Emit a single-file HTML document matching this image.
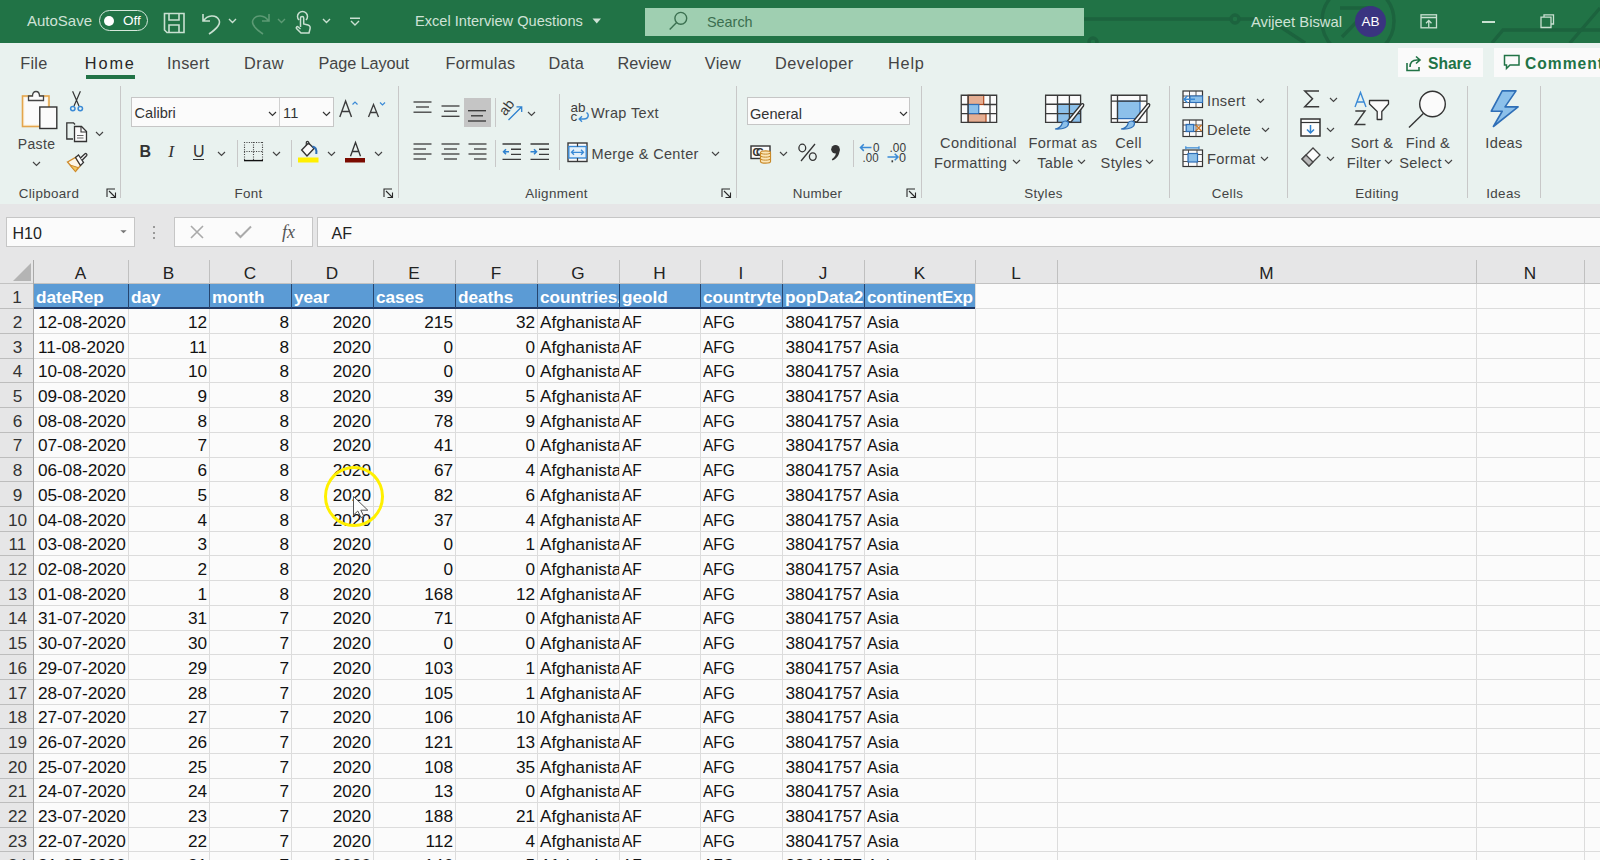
<!DOCTYPE html>
<html><head><meta charset="utf-8"><style>
html,body{margin:0;padding:0}
body{width:1600px;height:860px;overflow:hidden;position:relative;background:#fbfbfb;font-family:"Liberation Sans",sans-serif}
.r{position:absolute;box-sizing:border-box}
svg.r{box-sizing:content-box;overflow:visible}
.t{position:absolute;white-space:nowrap;line-height:1}
</style></head><body>
<div class="r" style="left:0.00px;top:0.00px;width:1600.00px;height:43.00px;background:#217346;"></div>
<svg class="r" style="left:1080px;top:0px" width="520" height="43" viewBox="0 0 520 43" fill="none">
<g stroke="#1c633e" stroke-width="3.4" fill="none">
<path d="M0 19 H151 M159 19 H175"/>
<circle cx="155" cy="19" r="4"/>
<path d="M190 20 L225 43"/>
<circle cx="278" cy="21" r="36"/>
<path d="M260 8 H290 L262 37"/>
<path d="M412 43 L423 30 H520"/>
<path d="M490 43 L520 8"/>
<circle cx="13" cy="42" r="4"/>
</g></svg>
<div class="t" style="left:27.00px;top:13px;font-size:15.00px;color:#cfe2d6;font-weight:normal;">AutoSave</div>
<div class="r" style="left:99px;top:10px;width:49px;height:21px;border:1.8px solid #d6e8dc;border-radius:11px"></div>
<div class="r" style="left:104px;top:15.5px;width:10px;height:10px;border-radius:50%;background:#fff"></div>
<div class="t" style="left:123.00px;top:14px;font-size:13.50px;color:#fff;font-weight:normal;">Off</div>
<svg class="r" style="left:163px;top:12px" width="23" height="22" viewBox="0 0 23 22" fill="none"><path d="M1.5 1.5 H21 V20.5 H4 L1.5 18 Z M6 1.5 V8 H16 V1.5 M6 20.5 V13 H16 V20.5" stroke="#c9e0d1" stroke-width="1.6"/></svg>
<svg class="r" style="left:200px;top:11px" width="24" height="24" viewBox="0 0 24 24" fill="none"><path d="M3 3 V10 H10 M3.5 10 C 7 4, 16 3, 19 9 C 21 13, 18 17, 9 23" stroke="#c9e0d1" stroke-width="1.6"/></svg>
<svg class="r" style="left:228px;top:18px" width="9" height="6" viewBox="0 0 9 6" fill="none"><path d="M1 1 L4.5 4.5 L8 1" stroke="#c9e0d1" stroke-width="1.4"/></svg>
<svg class="r" style="left:249px;top:11px" width="24" height="24" viewBox="0 0 24 24" fill="none"><path d="M20 3 V10 H13 M19.5 10 C 16 4, 7 3, 4 9 C 2 13, 5 17, 14 23" stroke="#5c9a74" stroke-width="1.6"/></svg>
<svg class="r" style="left:277px;top:18px" width="9" height="6" viewBox="0 0 9 6" fill="none"><path d="M1 1 L4.5 4.5 L8 1" stroke="#5c9a74" stroke-width="1.4"/></svg>
<svg class="r" style="left:293px;top:12px" width="19" height="22" viewBox="0 0 19 22" fill="none"><path d="M6 8 A5 5 0 1 1 13 8 M7.5 15 V6 A1.6 1.6 0 0 1 10.7 6 V12 L15 13 C17 13.5 17.5 15 17 17 L16 21 H8 L3.5 16.5 C2.8 15.5 4 14 5.2 15 L7.5 17" stroke="#c9e0d1" stroke-width="1.5"/></svg>
<svg class="r" style="left:322px;top:18px" width="9" height="6" viewBox="0 0 9 6" fill="none"><path d="M1 1 L4.5 4.5 L8 1" stroke="#c9e0d1" stroke-width="1.4"/></svg>
<svg class="r" style="left:349px;top:17px" width="12" height="10" viewBox="0 0 12 10" fill="none"><path d="M1 1.2 H11 M2 4 L6 8 L10 4" stroke="#c9e0d1" stroke-width="1.4"/></svg>
<div class="t" style="left:415.00px;top:14px;font-size:14.60px;color:#cfe2d6;font-weight:normal;">Excel Interview Questions</div>
<svg class="r" style="left:592px;top:18px" width="10" height="6" viewBox="0 0 10 6" fill="none"><path d="M0.5 0.5 H9 L4.75 5.5 Z" fill="#cfe2d6"/></svg>
<div class="r" style="left:645.00px;top:7.50px;width:439.00px;height:28.00px;background:#9fcfb1;"></div>
<svg class="r" style="left:667px;top:10px" width="24" height="24" viewBox="0 0 24 24" fill="none"><circle cx="13.8" cy="8.3" r="5.9" stroke="#3b7050" stroke-width="1.4"/><path d="M9.6 12.5 L2.7 19.6" stroke="#3b7050" stroke-width="1.4"/></svg>
<div class="t" style="left:707.00px;top:15px;font-size:14.40px;color:#3b6e4f;font-weight:normal;">Search</div>
<div class="t" style="left:1251.00px;top:15px;font-size:14.80px;color:#cfe2d6;font-weight:normal;">Avijeet Biswal</div>
<div class="r" style="left:1355px;top:6px;width:31px;height:31px;border-radius:50%;background:#3a3480"></div>
<div class="t" style="left:1370.50px;top:15px;font-size:13.50px;color:#fff;font-weight:normal;transform:translateX(-50%);">AB</div>
<svg class="r" style="left:1419px;top:13px" width="20" height="16" viewBox="0 0 20 16" fill="none"><rect x="2" y="1.8" width="15.5" height="13" stroke="#c9e0d1" stroke-width="1.3"/><path d="M2 4.5 H17.5 M9.75 14.5 V7.5 M7 10.2 L9.75 7.5 L12.5 10.2" stroke="#c9e0d1" stroke-width="1.3"/></svg>
<div class="r" style="left:1482.00px;top:21.00px;width:13.00px;height:1.50px;background:#c9e0d1;"></div>
<svg class="r" style="left:1539px;top:13px" width="17" height="16" viewBox="0 0 17 16" fill="none"><path d="M5 4.2 V1.8 H14.5 V11 H12 M2 4.2 H12 V14.5 H2 Z" stroke="#c9e0d1" stroke-width="1.3"/></svg>
<div class="r" style="left:0.00px;top:43.00px;width:1600.00px;height:161.00px;background:#e9f2ef;"></div>
<div class="t" style="left:20.20px;top:55px;font-size:16.30px;color:#444;font-weight:normal;letter-spacing:0.3px;">File</div>
<div class="t" style="left:84.80px;top:55px;font-size:16.30px;color:#262626;font-weight:normal;letter-spacing:1.9px;">Home</div>
<div class="t" style="left:167.00px;top:55px;font-size:16.30px;color:#444;font-weight:normal;letter-spacing:0.3px;">Insert</div>
<div class="t" style="left:244.00px;top:55px;font-size:16.30px;color:#444;font-weight:normal;letter-spacing:0.5px;">Draw</div>
<div class="t" style="left:318.50px;top:55px;font-size:16.30px;color:#444;font-weight:normal;letter-spacing:-0.1px;">Page Layout</div>
<div class="t" style="left:445.50px;top:55px;font-size:16.30px;color:#444;font-weight:normal;letter-spacing:0.25px;">Formulas</div>
<div class="t" style="left:548.50px;top:55px;font-size:16.30px;color:#444;font-weight:normal;letter-spacing:0.3px;">Data</div>
<div class="t" style="left:617.50px;top:55px;font-size:16.30px;color:#444;font-weight:normal;letter-spacing:0px;">Review</div>
<div class="t" style="left:704.80px;top:55px;font-size:16.30px;color:#444;font-weight:normal;letter-spacing:0.3px;">View</div>
<div class="t" style="left:775.00px;top:55px;font-size:16.30px;color:#444;font-weight:normal;letter-spacing:0.5px;">Developer</div>
<div class="t" style="left:888.00px;top:55px;font-size:16.30px;color:#444;font-weight:normal;letter-spacing:0.8px;">Help</div>
<div class="r" style="left:86.00px;top:75.00px;width:48.50px;height:3.70px;background:#217346;"></div>
<div class="r" style="left:1398.00px;top:48.00px;width:85.00px;height:28.50px;background:#fafafa;"></div>
<svg class="r" style="left:1405px;top:55px" width="18" height="17" viewBox="0 0 18 17" fill="none"><path d="M2 8 V15.5 H14 V12 M5 12 C5 7 8 5 12 5 H14 M11 1.5 L15 5 L11 8.5" stroke="#217346" stroke-width="1.6"/></svg>
<div class="t" style="left:1428.00px;top:56px;font-size:15.60px;color:#217346;font-weight:bold;">Share</div>
<div class="r" style="left:1494.00px;top:48.00px;width:106.00px;height:28.50px;background:#fafafa;"></div>
<svg class="r" style="left:1503px;top:54px" width="18" height="17" viewBox="0 0 18 17" fill="none"><path d="M1.5 1.5 H16 V11 H7 L3.5 14.5 V11 H1.5 Z" stroke="#217346" stroke-width="1.5"/></svg>
<div class="t" style="left:1525.00px;top:56px;font-size:15.60px;color:#217346;font-weight:bold;letter-spacing:1px;">Comments</div>
<div class="r" style="left:120.30px;top:86.00px;width:1.00px;height:112.00px;background:#c8c8c8;"></div>
<div class="r" style="left:398.00px;top:86.00px;width:1.00px;height:112.00px;background:#c8c8c8;"></div>
<div class="r" style="left:736.30px;top:86.00px;width:1.00px;height:112.00px;background:#c8c8c8;"></div>
<div class="r" style="left:920.50px;top:86.00px;width:1.00px;height:112.00px;background:#c8c8c8;"></div>
<div class="r" style="left:1168.70px;top:86.00px;width:1.00px;height:112.00px;background:#c8c8c8;"></div>
<div class="r" style="left:1286.70px;top:86.00px;width:1.00px;height:112.00px;background:#c8c8c8;"></div>
<div class="r" style="left:1467.00px;top:86.00px;width:1.00px;height:112.00px;background:#c8c8c8;"></div>
<div class="r" style="left:1540.00px;top:86.00px;width:1.00px;height:112.00px;background:#c8c8c8;"></div>
<svg class="r" style="left:21px;top:90px" width="38" height="41" viewBox="0 0 38 41" fill="none">
<rect x="1.5" y="6" width="26.5" height="30.5" fill="#fdf3e0" stroke="#e4a54c" stroke-width="1.6"/>
<rect x="3.5" y="8" width="22.5" height="26.5" fill="#fbfbfb"/>
<path d="M7.5 10.5 V6 H11.5 C11.5 2.5 13 1.5 15 1.5 C17 1.5 18.5 2.5 18.5 6 H22.5 V10.5 Z" fill="#fbfbfb" stroke="#444" stroke-width="1.3"/>
<rect x="18.8" y="17" width="17" height="21.5" fill="#fbfbfb" stroke="#333" stroke-width="1.4"/></svg>
<div class="t" style="left:36.50px;top:137px;font-size:14.00px;color:#444;font-weight:normal;transform:translateX(-50%);letter-spacing:0.35px;">Paste</div>
<svg class="r" style="left:31.5px;top:160.5px" width="9" height="6" viewBox="0 0 9 6" fill="none"><path d="M1 1 L4.5 4.5 L8 1" stroke="#444" stroke-width="1.15"/></svg>
<svg class="r" style="left:68px;top:91px" width="18" height="22" viewBox="0 0 18 22" fill="none"><path d="M4.6 0.3 L11 15 M12.4 0.3 L6 15" stroke="#333" stroke-width="1.2"/><circle cx="4.8" cy="17.6" r="2.2" stroke="#3a8ad6" stroke-width="1.5"/><circle cx="12.3" cy="17.6" r="2.2" stroke="#3a8ad6" stroke-width="1.5"/></svg>
<svg class="r" style="left:65px;top:121px" width="24" height="23" viewBox="0 0 24 23" fill="none"><path d="M8 18 H1.8 V1.8 H8.5 L10 3.5" stroke="#333" stroke-width="1.3"/><path d="M9.5 5.5 H16.5 L21.5 10.5 V20.5 H9.5 Z" fill="#fbfbfb" stroke="#333" stroke-width="1.3"/><path d="M16 5.5 V11 H21.5" stroke="#333" stroke-width="1.1"/><path d="M12 14.5 H18.5 M12 17 H18.5" stroke="#666" stroke-width="1"/></svg>
<svg class="r" style="left:94.5px;top:130.5px" width="9" height="6" viewBox="0 0 9 6" fill="none"><path d="M1 1 L4.5 4.5 L8 1" stroke="#444" stroke-width="1.15"/></svg>
<svg class="r" style="left:66px;top:152px" width="22" height="21" viewBox="0 0 22 21" fill="none"><path d="M1.5 10 L9.5 5.5 L14.5 13.5 L9.5 19.5 Z" fill="#fdf6e6" stroke="#cf8a2a" stroke-width="1.4"/><path d="M4 13 L12 15.5 L9.5 19.5 Z" fill="#f0c860" stroke="#cf8a2a" stroke-width="1"/><path d="M9.5 5.5 L12.5 3 L17.5 10.5 L14.5 13.5 Z" fill="#fbfbfb" stroke="#333" stroke-width="1.3"/><path d="M14.5 6 L19 1.8 C20 1 21.5 2.5 20.7 3.5 L16.3 8" fill="#fbfbfb" stroke="#333" stroke-width="1.3"/></svg>
<div class="t" style="left:49.00px;top:187px;font-size:13.40px;color:#444;font-weight:normal;transform:translateX(-50%);letter-spacing:0.35px;">Clipboard</div>
<svg class="r" style="left:105.5px;top:188px" width="11" height="11" viewBox="0 0 11 11" fill="none"><path d="M1 9 V1 H9 M3 3 L9.5 9.5 M9.5 4.5 V9.5 H4.5" stroke="#2a2a2a" stroke-width="1.1"/></svg>
<div class="r" style="left:131px;top:97px;width:203px;height:30px;border:1px solid #c6c6c6;background:#fbfbfb"></div>
<div class="r" style="left:279.00px;top:98.00px;width:1.00px;height:28.00px;background:#d0d0d0;"></div>
<div class="t" style="left:134.50px;top:106px;font-size:14.60px;color:#333;font-weight:normal;letter-spacing:0px;">Calibri</div>
<svg class="r" style="left:267.5px;top:110.5px" width="9" height="6" viewBox="0 0 9 6" fill="none"><path d="M1 1 L4.5 4.5 L8 1" stroke="#333" stroke-width="1.15"/></svg>
<div class="t" style="left:283.00px;top:106px;font-size:14.60px;color:#333;font-weight:normal;letter-spacing:0.3px;">11</div>
<svg class="r" style="left:321.5px;top:110.5px" width="9" height="6" viewBox="0 0 9 6" fill="none"><path d="M1 1 L4.5 4.5 L8 1" stroke="#333" stroke-width="1.15"/></svg>
<svg class="r" style="left:330px;top:95px" width="60" height="25" viewBox="0 0 60 25" fill="none"><path d="M9.8 22 L15.6 6 L21.5 22 M11.9 16.5 H19.4" stroke="#3c3c3c" stroke-width="1.4"/><path d="M22.5 9.5 L25 7 L27.5 9.5" stroke="#3a8ad6" stroke-width="1.2"/><path d="M38.5 22 L43.5 9.5 L48.5 22 M40.3 17.5 H46.7" stroke="#3c3c3c" stroke-width="1.3"/><path d="M50 7.5 L52.5 10 L55 7.5" stroke="#3a8ad6" stroke-width="1.2"/></svg>
<div class="t" style="left:139.50px;top:144px;font-size:16.00px;color:#333;font-weight:bold;">B</div>
<div class="t" style="left:168.20px;top:143px;font-size:17.50px;color:#333;font-weight:normal;font-family:'Liberation Serif',serif;"><i>I</i></div>
<div class="t" style="left:193.00px;top:144px;font-size:16.00px;color:#333;font-weight:normal;">U</div>
<div class="r" style="left:193.00px;top:159.00px;width:11.00px;height:1.30px;background:#333;"></div>
<svg class="r" style="left:216.5px;top:150.5px" width="9" height="6" viewBox="0 0 9 6" fill="none"><path d="M1 1 L4.5 4.5 L8 1" stroke="#444" stroke-width="1.15"/></svg>
<div class="r" style="left:236.50px;top:140.00px;width:1.00px;height:27.00px;background:#c8c8c8;"></div>
<svg class="r" style="left:243px;top:141px" width="22" height="22" viewBox="0 0 22 22" fill="none"><path d="M1 1.5 H20 M1 10.5 H20 M1.5 1 V19 M19.5 1 V19 M10.5 1 V19" stroke="#444" stroke-width="1.1" stroke-dasharray="1.1 1.3"/><path d="M1 19.6 H20" stroke="#111" stroke-width="1.4"/></svg>
<svg class="r" style="left:271.5px;top:150.5px" width="9" height="6" viewBox="0 0 9 6" fill="none"><path d="M1 1 L4.5 4.5 L8 1" stroke="#444" stroke-width="1.15"/></svg>
<div class="r" style="left:290.50px;top:140.00px;width:1.00px;height:27.00px;background:#c8c8c8;"></div>
<svg class="r" style="left:297px;top:140px" width="24" height="25" viewBox="0 0 24 25" fill="none"><path d="M4.7 10 L11.5 3 L17 8.5 L10 16 Z" fill="#fbfbfb" stroke="#333" stroke-width="1.4"/><path d="M9.3 5.3 V2.5 C9.3 1 11.5 1 11.8 2.5 L12.3 5" stroke="#333" stroke-width="1.2"/><path d="M15.5 6.5 C18.5 7 19.8 10 19.3 14" stroke="#2f6fb7" stroke-width="2"/><rect x="1" y="17.5" width="20.5" height="5" fill="#ffef00"/></svg>
<svg class="r" style="left:326.5px;top:150.5px" width="9" height="6" viewBox="0 0 9 6" fill="none"><path d="M1 1 L4.5 4.5 L8 1" stroke="#444" stroke-width="1.15"/></svg>
<svg class="r" style="left:344px;top:141px" width="22" height="22" viewBox="0 0 22 22" fill="none"><path d="M6.5 15.2 L11.5 1.5 L16.5 15.2 M8.2 10.5 H14.8" stroke="#333" stroke-width="1.3"/><rect x="1" y="17" width="20" height="4.5" fill="#7b0b00"/></svg>
<svg class="r" style="left:373.5px;top:150.5px" width="9" height="6" viewBox="0 0 9 6" fill="none"><path d="M1 1 L4.5 4.5 L8 1" stroke="#444" stroke-width="1.15"/></svg>
<div class="t" style="left:248.50px;top:187px;font-size:13.40px;color:#444;font-weight:normal;transform:translateX(-50%);letter-spacing:0.35px;">Font</div>
<svg class="r" style="left:383px;top:188px" width="11" height="11" viewBox="0 0 11 11" fill="none"><path d="M1 9 V1 H9 M3 3 L9.5 9.5 M9.5 4.5 V9.5 H4.5" stroke="#2a2a2a" stroke-width="1.1"/></svg>
<svg class="r" style="left:412px;top:100px" width="22" height="22" viewBox="0 0 22 22" fill="none"><path d="M1.5 2 H19.5" stroke="#444" stroke-width="1.35"/><path d="M4 7 H17" stroke="#444" stroke-width="1.35"/><path d="M1.5 12.2 H19.5" stroke="#444" stroke-width="1.35"/></svg>
<svg class="r" style="left:439.5px;top:102.5px" width="22" height="22" viewBox="0 0 22 22" fill="none"><path d="M1.5 3 H19.5" stroke="#444" stroke-width="1.35"/><path d="M4 8.2 H17" stroke="#444" stroke-width="1.35"/><path d="M1.5 13.3 H19.5" stroke="#444" stroke-width="1.35"/></svg>
<div class="r" style="left:463.50px;top:98.00px;width:27.00px;height:28.50px;background:#c5c5c5;"></div>
<svg class="r" style="left:466px;top:108px" width="22" height="22" viewBox="0 0 22 22" fill="none"><path d="M2 2.7 H20" stroke="#3a3a3a" stroke-width="1.35"/><path d="M5 7.8 H17" stroke="#3a3a3a" stroke-width="1.35"/><path d="M2 13 H20" stroke="#3a3a3a" stroke-width="1.35"/></svg>
<div class="r" style="left:494.50px;top:98.00px;width:1.00px;height:29.00px;background:#c8c8c8;"></div>
<svg class="r" style="left:500px;top:98px" width="25" height="25" viewBox="0 0 25 25" fill="none"><text x="0" y="0" font-family="Liberation Sans" font-size="14" fill="#3a3a3a" transform="translate(5.5,18.5) rotate(-52)">ab</text><path d="M8.5 22 L21.5 9 M16.5 8.8 H21.7 V14" stroke="#2f82d0" stroke-width="1.3"/></svg>
<svg class="r" style="left:526.5px;top:110.5px" width="9" height="6" viewBox="0 0 9 6" fill="none"><path d="M1 1 L4.5 4.5 L8 1" stroke="#444" stroke-width="1.15"/></svg>
<div class="r" style="left:558.60px;top:94.00px;width:1.00px;height:76.00px;background:#c8c8c8;"></div>
<svg class="r" style="left:570px;top:100px" width="22" height="24" viewBox="0 0 22 24" fill="none"><text x="0.5" y="11.5" font-family="Liberation Sans" font-size="13.5" fill="#3c3c3c" textLength="15" lengthAdjust="spacingAndGlyphs">ab</text><text x="0.5" y="20.5" font-family="Liberation Sans" font-size="13.5" fill="#3c3c3c">c</text><path d="M16.5 12.5 C19.5 14.5 18.5 19 14 19 H9.5 M12 16.2 L9.2 19 L12 21.8" stroke="#3a8ad6" stroke-width="1.4"/></svg>
<div class="t" style="left:591.00px;top:106px;font-size:14.50px;color:#444;font-weight:normal;letter-spacing:0.35px;">Wrap Text</div>
<svg class="r" style="left:412px;top:141px" width="22" height="22" viewBox="0 0 22 22" fill="none"><path d="M1.5 3 H19.5" stroke="#444" stroke-width="1.35"/><path d="M1.5 8 H14" stroke="#444" stroke-width="1.35"/><path d="M1.5 13 H19.5" stroke="#444" stroke-width="1.35"/><path d="M1.5 18 H14" stroke="#444" stroke-width="1.35"/></svg>
<svg class="r" style="left:439.5px;top:141px" width="22" height="22" viewBox="0 0 22 22" fill="none"><path d="M1.5 3 H19.5" stroke="#444" stroke-width="1.35"/><path d="M4 8 H17" stroke="#444" stroke-width="1.35"/><path d="M1.5 13 H19.5" stroke="#444" stroke-width="1.35"/><path d="M4 18 H17" stroke="#444" stroke-width="1.35"/></svg>
<svg class="r" style="left:467px;top:141px" width="22" height="22" viewBox="0 0 22 22" fill="none"><path d="M1.5 3 H19.5" stroke="#444" stroke-width="1.35"/><path d="M7 8 H19.5" stroke="#444" stroke-width="1.35"/><path d="M1.5 13 H19.5" stroke="#444" stroke-width="1.35"/><path d="M7 18 H19.5" stroke="#444" stroke-width="1.35"/></svg>
<div class="r" style="left:494.50px;top:140.00px;width:1.00px;height:27.00px;background:#c8c8c8;"></div>
<svg class="r" style="left:501px;top:141px" width="22" height="22" viewBox="0 0 22 22" fill="none"><path d="M1.5 3 H20 M10 8.2 H20 M10 13.3 H20 M1.5 18.4 H20" stroke="#3c3c3c" stroke-width="1.35"/><path d="M8 10.7 H2.5 M5 8.2 L2.5 10.7 L5 13.2" stroke="#2f82d0" stroke-width="1.5"/></svg>
<svg class="r" style="left:528.5px;top:141px" width="22" height="22" viewBox="0 0 22 22" fill="none"><path d="M1.5 3 H20 M10 8.2 H20 M10 13.3 H20 M1.5 18.4 H20" stroke="#3c3c3c" stroke-width="1.35"/><path d="M1.5 10.7 H7.5 M5 8.2 L7.5 10.7 L5 13.2" stroke="#2f82d0" stroke-width="1.5"/></svg>
<svg class="r" style="left:567px;top:141.5px" width="22" height="21" viewBox="0 0 22 21" fill="none"><rect x="1" y="1" width="19" height="18.5" fill="#fbfbfb" stroke="#3a3a3a" stroke-width="1.4"/><rect x="1.8" y="4.5" width="17.4" height="11.5" fill="#e3f0fa" stroke="#3a8ad6" stroke-width="1.4"/><path d="M10.5 1 V4.5 M10.5 16 V19.5" stroke="#3a3a3a" stroke-width="1.2"/><path d="M4.5 10.3 H16.5 M7 7.8 L4.5 10.3 L7 12.8 M14 7.8 L16.5 10.3 L14 12.8" stroke="#3a8ad6" stroke-width="1.3"/></svg>
<div class="t" style="left:591.50px;top:147px;font-size:14.50px;color:#444;font-weight:normal;letter-spacing:0.35px;">Merge &amp; Center</div>
<svg class="r" style="left:710.5px;top:150.5px" width="9" height="6" viewBox="0 0 9 6" fill="none"><path d="M1 1 L4.5 4.5 L8 1" stroke="#444" stroke-width="1.15"/></svg>
<div class="t" style="left:556.50px;top:187px;font-size:13.40px;color:#444;font-weight:normal;transform:translateX(-50%);letter-spacing:0.35px;">Alignment</div>
<svg class="r" style="left:720.5px;top:188px" width="11" height="11" viewBox="0 0 11 11" fill="none"><path d="M1 9 V1 H9 M3 3 L9.5 9.5 M9.5 4.5 V9.5 H4.5" stroke="#2a2a2a" stroke-width="1.1"/></svg>
<div class="r" style="left:747px;top:97px;width:163px;height:28px;border:1px solid #c6c6c6;background:#fbfbfb"></div>
<div class="t" style="left:750.00px;top:107px;font-size:14.60px;color:#333;font-weight:normal;letter-spacing:0px;">General</div>
<svg class="r" style="left:898.5px;top:110.5px" width="9" height="6" viewBox="0 0 9 6" fill="none"><path d="M1 1 L4.5 4.5 L8 1" stroke="#333" stroke-width="1.15"/></svg>
<svg class="r" style="left:749px;top:144px" width="24" height="22" viewBox="0 0 24 22" fill="none"><rect x="2" y="2" width="19" height="12.5" stroke="#333" stroke-width="1.4" fill="#fbfbfb"/><text x="3.6" y="12.3" font-family="Liberation Sans" font-size="10.5" font-weight="bold" fill="#333" textLength="11">CC</text><path d="M11.5 8.5 C11.5 6.3 21.5 6.3 21.5 8.5 V17.5 C21.5 19.7 11.5 19.7 11.5 17.5 Z" fill="#fbe6b8" stroke="#c98a2a" stroke-width="1.2"/><path d="M11.5 8.5 C11.5 10.7 21.5 10.7 21.5 8.5 M11.5 11.5 C11.5 13.7 21.5 13.7 21.5 11.5 M11.5 14.5 C11.5 16.7 21.5 16.7 21.5 14.5" stroke="#c98a2a" stroke-width="1"/></svg>
<svg class="r" style="left:778.5px;top:150.5px" width="9" height="6" viewBox="0 0 9 6" fill="none"><path d="M1 1 L4.5 4.5 L8 1" stroke="#444" stroke-width="1.15"/></svg>
<svg class="r" style="left:797px;top:143px" width="22" height="19" viewBox="0 0 22 19" fill="none"><ellipse cx="5.3" cy="5" rx="3.4" ry="3.8" stroke="#333" stroke-width="1.3"/><ellipse cx="15.8" cy="13.6" rx="3.4" ry="3.8" stroke="#333" stroke-width="1.3"/><path d="M18 1 L4 18" stroke="#333" stroke-width="1.3"/></svg>
<svg class="r" style="left:829px;top:144px" width="13" height="18" viewBox="0 0 13 18" fill="none"><circle cx="6.5" cy="5.3" r="4.3" fill="#333"/><path d="M10.6 5.5 C 10.8 10.5 8 14.5 3.5 16.5 L2.8 15.3 C 6 13 7.2 10.5 7 7.5 Z" fill="#333"/></svg>
<div class="r" style="left:852.70px;top:140.00px;width:1.00px;height:27.00px;background:#c8c8c8;"></div>
<svg class="r" style="left:859px;top:141px" width="22" height="23" viewBox="0 0 22 23" fill="none"><text x="14" y="11.3" font-family="Liberation Sans" font-size="13" fill="#3a3a3a" textLength="6.5" lengthAdjust="spacingAndGlyphs">0</text><text x="3.6" y="21.4" font-family="Liberation Sans" font-size="13" fill="#3a3a3a" textLength="16" lengthAdjust="spacingAndGlyphs">.00</text><path d="M12.5 6.6 H1.5 M4.8 3.3 L1.5 6.6 L4.8 9.9" stroke="#3a8ad6" stroke-width="1.5"/></svg>
<svg class="r" style="left:886px;top:141px" width="22" height="23" viewBox="0 0 22 23" fill="none"><text x="3.5" y="11.3" font-family="Liberation Sans" font-size="13" fill="#3a3a3a" textLength="16.5" lengthAdjust="spacingAndGlyphs">.00</text><text x="13" y="21.4" font-family="Liberation Sans" font-size="13" fill="#3a3a3a" textLength="7" lengthAdjust="spacingAndGlyphs">0</text><rect x="5.5" y="19.3" width="1.6" height="2" fill="#3a3a3a"/><path d="M1.5 16 H12 M8.7 12.7 L12 16 L8.7 19.3" stroke="#3a8ad6" stroke-width="1.5"/></svg>
<div class="t" style="left:817.50px;top:187px;font-size:13.40px;color:#444;font-weight:normal;transform:translateX(-50%);letter-spacing:0.35px;">Number</div>
<svg class="r" style="left:905.5px;top:188px" width="11" height="11" viewBox="0 0 11 11" fill="none"><path d="M1 9 V1 H9 M3 3 L9.5 9.5 M9.5 4.5 V9.5 H4.5" stroke="#2a2a2a" stroke-width="1.1"/></svg>
<svg class="r" style="left:960px;top:94px" width="38" height="30" viewBox="0 0 38 30" fill="none">
<rect x="1.25" y="1.25" width="35.4" height="27.2" fill="#fbfbfb"/>
<rect x="8.1" y="1.25" width="15.6" height="9.25" fill="#e4ae93" stroke="#b0481c" stroke-width="1.2"/>
<rect x="8.1" y="19.6" width="17.9" height="8.85" fill="#e4ae93" stroke="#b0481c" stroke-width="1.2"/>
<rect x="8.1" y="10.5" width="10.65" height="9.1" fill="#8cc0ea" stroke="#2f6fb7" stroke-width="1.2"/>
<path d="M1.25 1.25 H36.65 V28.45 H1.25 Z M8.1 1.25 V28.45 M30 1.25 V28.45 M1.25 10.5 H8.1 M23.7 10.5 H36.65 M1.25 19.6 H8.1 M18.75 19.6 H36.65" stroke="#3a3a3a" stroke-width="1.3"/></svg>
<div class="t" style="left:978.50px;top:136px;font-size:14.60px;color:#444;font-weight:normal;transform:translateX(-50%);letter-spacing:0.35px;">Conditional</div>
<div class="t" style="left:970.50px;top:156px;font-size:14.60px;color:#444;font-weight:normal;transform:translateX(-50%);letter-spacing:0.35px;">Formatting</div>
<svg class="r" style="left:1011.5px;top:158.5px" width="9" height="6" viewBox="0 0 9 6" fill="none"><path d="M1 1 L4.5 4.5 L8 1" stroke="#444" stroke-width="1.15"/></svg>
<svg class="r" style="left:1044px;top:94px" width="42" height="37" viewBox="0 0 42 37" fill="none">
<rect x="1.6" y="1.25" width="35" height="27.2" fill="#fbfbfb"/>
<rect x="13.5" y="10.25" width="23.1" height="18.2" fill="#8cc0ea" stroke="#2f6fb7" stroke-width="1.2"/>
<path d="M1.6 1.25 H36.6 V28.45 H1.6 Z M13.5 1.25 V28.45 M25.4 1.25 V28.45 M1.6 10.25 H36.6 M1.6 19.6 H36.6" stroke="#3a3a3a" stroke-width="1.3"/>
<path d="M37 10.5 C38.5 8.8 40.5 10 39.5 12 L27 28 L23.5 27 Z" fill="#fbfbfb" stroke="#333" stroke-width="1.3" stroke-linejoin="round"/>
<path d="M11 35 C 16 34.5 17.5 32 18.5 28.5 C20 26.3 24.5 26.5 24.5 29.5 C 24.5 33 20 35.5 11 35 Z" fill="#8cc0ea" stroke="#2f6fb7" stroke-width="1.2"/></svg>
<div class="t" style="left:1063.00px;top:136px;font-size:14.60px;color:#444;font-weight:normal;transform:translateX(-50%);letter-spacing:0.35px;">Format as</div>
<div class="t" style="left:1055.50px;top:156px;font-size:14.60px;color:#444;font-weight:normal;transform:translateX(-50%);letter-spacing:0.35px;">Table</div>
<svg class="r" style="left:1076.5px;top:158.5px" width="9" height="6" viewBox="0 0 9 6" fill="none"><path d="M1 1 L4.5 4.5 L8 1" stroke="#444" stroke-width="1.15"/></svg>
<svg class="r" style="left:1110px;top:94px" width="42" height="37" viewBox="0 0 42 37" fill="none">
<rect x="1.25" y="1.25" width="35.65" height="27.2" fill="#fbfbfb"/>
<rect x="7.5" y="7.1" width="22.5" height="17.5" fill="#8cc0ea" stroke="#2f6fb7" stroke-width="1.2"/>
<path d="M1.25 1.25 H36.9 V28.45 H1.25 Z M7.5 1.25 V28.45 M30 1.25 V7.1 M1.25 7.1 H36.9 M1.25 24.6 H7.5" stroke="#3a3a3a" stroke-width="1.3"/>
<path d="M37 10.5 C38.5 8.8 40.5 10 39.5 12 L27 28 L23.5 27 Z" fill="#fbfbfb" stroke="#333" stroke-width="1.3" stroke-linejoin="round"/>
<path d="M11 35 C 16 34.5 17.5 32 18.5 28.5 C20 26.3 24.5 26.5 24.5 29.5 C 24.5 33 20 35.5 11 35 Z" fill="#8cc0ea" stroke="#2f6fb7" stroke-width="1.2"/></svg>
<div class="t" style="left:1128.50px;top:136px;font-size:14.60px;color:#444;font-weight:normal;transform:translateX(-50%);letter-spacing:0.35px;">Cell</div>
<div class="t" style="left:1121.50px;top:156px;font-size:14.60px;color:#444;font-weight:normal;transform:translateX(-50%);letter-spacing:0.35px;">Styles</div>
<svg class="r" style="left:1144.5px;top:158.5px" width="9" height="6" viewBox="0 0 9 6" fill="none"><path d="M1 1 L4.5 4.5 L8 1" stroke="#444" stroke-width="1.15"/></svg>
<div class="t" style="left:1043.50px;top:187px;font-size:13.40px;color:#444;font-weight:normal;transform:translateX(-50%);letter-spacing:0.35px;">Styles</div>
<svg class="r" style="left:1182px;top:89.5px" width="21" height="22" viewBox="0 0 21 22" fill="none"><rect x="1" y="1" width="19.5" height="16.5" fill="#fbfbfb" stroke="#333" stroke-width="1.2"/><path d="M7.5 1 V17.5 M14 1 V17.5 M1 6 H20.5 M1 12.5 H20.5" stroke="#444" stroke-width="0.9"/><rect x="8" y="6" width="12.5" height="6.5" fill="#8cc0ea" stroke="#2f6fb7" stroke-width="1.1"/><path d="M13 9.3 H2 M5.5 5.8 L2 9.3 L5.5 12.8" stroke="#3a8ad6" stroke-width="1.5"/></svg>
<div class="t" style="left:1207.00px;top:94px;font-size:14.60px;color:#444;font-weight:normal;letter-spacing:0.35px;">Insert</div>
<svg class="r" style="left:1255.5px;top:97.5px" width="9" height="6" viewBox="0 0 9 6" fill="none"><path d="M1 1 L4.5 4.5 L8 1" stroke="#444" stroke-width="1.15"/></svg>
<svg class="r" style="left:1182px;top:119px" width="21" height="22" viewBox="0 0 21 22" fill="none"><rect x="1" y="1" width="19.5" height="16.5" fill="#fbfbfb" stroke="#333" stroke-width="1.2"/><path d="M7.5 1 V17.5 M14 1 V17.5 M1 6 H20.5 M1 12.5 H20.5" stroke="#444" stroke-width="0.9"/><rect x="4.2" y="5.5" width="7.5" height="7" fill="#8cc0ea" stroke="#2f6fb7" stroke-width="1.3"/><path d="M13.8 6 L19.5 12 M19.5 6 L13.8 12" stroke="#d07a2a" stroke-width="1.4"/></svg>
<div class="t" style="left:1207.00px;top:123px;font-size:14.60px;color:#444;font-weight:normal;letter-spacing:0.35px;">Delete</div>
<svg class="r" style="left:1260.5px;top:126.5px" width="9" height="6" viewBox="0 0 9 6" fill="none"><path d="M1 1 L4.5 4.5 L8 1" stroke="#444" stroke-width="1.15"/></svg>
<svg class="r" style="left:1182px;top:146px" width="21" height="22" viewBox="0 0 21 22" fill="none"><rect x="1" y="4" width="19.5" height="16.5" fill="#fbfbfb" stroke="#333" stroke-width="1.2"/><path d="M6.5 4 V20.5 M15 4 V20.5 M1 8.5 H20.5 M1 15.5 H20.5" stroke="#444" stroke-width="0.9"/><rect x="6" y="7.5" width="9.5" height="8.5" fill="#8cc0ea" stroke="#2f6fb7" stroke-width="1.2"/><path d="M3.8 1.8 H17 M3.8 0.3 V3.3 M17 0.3 V3.3" stroke="#3a8ad6" stroke-width="1.2"/></svg>
<div class="t" style="left:1207.00px;top:152px;font-size:14.60px;color:#444;font-weight:normal;letter-spacing:0.35px;">Format</div>
<svg class="r" style="left:1259.5px;top:155.5px" width="9" height="6" viewBox="0 0 9 6" fill="none"><path d="M1 1 L4.5 4.5 L8 1" stroke="#444" stroke-width="1.15"/></svg>
<div class="t" style="left:1227.50px;top:187px;font-size:13.40px;color:#444;font-weight:normal;transform:translateX(-50%);letter-spacing:0.35px;">Cells</div>
<svg class="r" style="left:1300px;top:86px" width="24" height="26" viewBox="0 0 24 26" fill="none"><path d="M19 5 H4.8 L12.5 12.8 L4.8 20.7 H19.2" stroke="#3a3a3a" stroke-width="1.5" stroke-linejoin="miter"/></svg>
<svg class="r" style="left:1328.5px;top:96.5px" width="9" height="6" viewBox="0 0 9 6" fill="none"><path d="M1 1 L4.5 4.5 L8 1" stroke="#444" stroke-width="1.15"/></svg>
<svg class="r" style="left:1300px;top:118px" width="22" height="20" viewBox="0 0 22 20" fill="none"><rect x="1" y="1" width="19" height="17" fill="#fdfdfd" stroke="#333" stroke-width="1.5"/><path d="M1 4.5 H20" stroke="#333" stroke-width="1.2"/><path d="M10.5 7 V15 M7 11.5 L10.5 15 L14 11.5" stroke="#2f82d0" stroke-width="1.5"/></svg>
<svg class="r" style="left:1325.5px;top:126.5px" width="9" height="6" viewBox="0 0 9 6" fill="none"><path d="M1 1 L4.5 4.5 L8 1" stroke="#444" stroke-width="1.15"/></svg>
<svg class="r" style="left:1300px;top:146px" width="22" height="22" viewBox="0 0 22 22" fill="none"><path d="M2 13 L13 2 L20 9 L9 20 Z" fill="#fdfdfd" stroke="#444" stroke-width="1.3"/><path d="M2 13 L6 9 L13 16 L9 20 Z" fill="#b9b9b9" stroke="#444" stroke-width="1.3"/></svg>
<svg class="r" style="left:1325.5px;top:155.5px" width="9" height="6" viewBox="0 0 9 6" fill="none"><path d="M1 1 L4.5 4.5 L8 1" stroke="#444" stroke-width="1.15"/></svg>
<svg class="r" style="left:1350px;top:88px" width="44" height="40" viewBox="0 0 44 40" fill="none"><path d="M5 19 L10.5 4.5 L16 19 M7 14 H14" stroke="#3a8ad6" stroke-width="1.4"/><path d="M5.3 23 H15 L5.2 36.5 H15.5" stroke="#3a3a3a" stroke-width="1.4"/><path d="M19.5 12.5 H38.5 V16 L31.8 23.5 V31.5 H27.2 V23.5 L19.5 16 Z" fill="#fbfbfb" stroke="#333" stroke-width="1.3" stroke-linejoin="round"/></svg>
<div class="t" style="left:1372.00px;top:136px;font-size:14.60px;color:#444;font-weight:normal;transform:translateX(-50%);letter-spacing:0.35px;">Sort &amp;</div>
<div class="t" style="left:1364.00px;top:156px;font-size:14.60px;color:#444;font-weight:normal;transform:translateX(-50%);letter-spacing:0.35px;">Filter</div>
<svg class="r" style="left:1383.5px;top:158.5px" width="9" height="6" viewBox="0 0 9 6" fill="none"><path d="M1 1 L4.5 4.5 L8 1" stroke="#444" stroke-width="1.15"/></svg>
<svg class="r" style="left:1406px;top:88px" width="44" height="42" viewBox="0 0 44 42" fill="none"><circle cx="26.5" cy="16" r="12.8" fill="#fbfbfb" stroke="#333" stroke-width="1.4"/><path d="M17.3 25.5 L3 39.5" stroke="#333" stroke-width="1.4"/></svg>
<div class="t" style="left:1428.00px;top:136px;font-size:14.60px;color:#444;font-weight:normal;transform:translateX(-50%);letter-spacing:0.35px;">Find &amp;</div>
<div class="t" style="left:1420.50px;top:156px;font-size:14.60px;color:#444;font-weight:normal;transform:translateX(-50%);letter-spacing:0.35px;">Select</div>
<svg class="r" style="left:1443.5px;top:158.5px" width="9" height="6" viewBox="0 0 9 6" fill="none"><path d="M1 1 L4.5 4.5 L8 1" stroke="#444" stroke-width="1.15"/></svg>
<div class="t" style="left:1377.00px;top:187px;font-size:13.40px;color:#444;font-weight:normal;transform:translateX(-50%);letter-spacing:0.35px;">Editing</div>
<svg class="r" style="left:1488px;top:89px" width="32" height="40" viewBox="0 0 32 40" fill="none"><path d="M14.2 1.9 H28 L17 17.9 H30.1 L5.4 37.5 L14.2 22.25 H3.25 Z" fill="#8cc0ea" stroke="#2f6fb7" stroke-width="1.6" stroke-linejoin="round"/></svg>
<div class="t" style="left:1504.00px;top:136px;font-size:14.60px;color:#444;font-weight:normal;transform:translateX(-50%);letter-spacing:0.35px;">Ideas</div>
<div class="t" style="left:1503.50px;top:187px;font-size:13.40px;color:#444;font-weight:normal;transform:translateX(-50%);letter-spacing:0.35px;">Ideas</div>
<div class="r" style="left:0.00px;top:204.00px;width:1600.00px;height:80.00px;background:#e6e6e7;"></div>
<div class="r" style="left:6px;top:217px;width:129px;height:30px;border:1px solid #c6c6c6;background:#fbfbfb"></div>
<div class="t" style="left:12.50px;top:226px;font-size:16.00px;color:#222;font-weight:normal;">H10</div>
<svg class="r" style="left:119.5px;top:230px" width="8" height="4" viewBox="0 0 8 4" fill="none"><path d="M0.3 0.3 H6.7 L3.5 3.3 Z" fill="#777"/></svg>
<div class="r" style="left:152.50px;top:226.00px;width:2.20px;height:2.40px;background:#999;"></div>
<div class="r" style="left:152.50px;top:231.50px;width:2.20px;height:2.40px;background:#999;"></div>
<div class="r" style="left:152.50px;top:237.00px;width:2.20px;height:2.40px;background:#999;"></div>
<div class="r" style="left:174px;top:217px;width:139px;height:30px;border:1px solid #c6c6c6;background:#fbfbfb"></div>
<svg class="r" style="left:189px;top:224px" width="16" height="16" viewBox="0 0 16 16" fill="none"><path d="M2 2 L14 14 M14 2 L2 14" stroke="#aaa" stroke-width="1.6"/></svg>
<svg class="r" style="left:234px;top:225px" width="19" height="14" viewBox="0 0 19 14" fill="none"><path d="M1.5 7 L6.5 12 L17 1.5" stroke="#aaa" stroke-width="2"/></svg>
<div class="t" style="left:288.50px;top:223px;font-size:18.00px;color:#555;font-weight:normal;transform:translateX(-50%);font-family:'Liberation Serif',serif;"><i>fx</i></div>
<div class="r" style="left:317px;top:217px;width:1290px;height:30px;border:1px solid #c6c6c6;background:#fbfbfb"></div>
<div class="t" style="left:331.50px;top:226px;font-size:16.00px;color:#222;font-weight:normal;">AF</div>
<div class="r" style="left:33.00px;top:284.00px;width:1567.00px;height:576.00px;background:#fbfbfb;"></div>
<div class="r" style="left:0.00px;top:247.00px;width:1600.00px;height:37.00px;background:#e6e6e7;"></div>
<div class="r" style="left:0.00px;top:284.00px;width:33.00px;height:576.00px;background:#e6e6e7;"></div>
<svg class="r" style="left:13px;top:263px" width="19" height="18" viewBox="0 0 19 18" fill="none"><path d="M18 0 V18 H0 Z" fill="#b4b4b4"/></svg>
<div class="t" style="left:80.50px;top:265px;font-size:17.20px;color:#222;font-weight:normal;transform:translateX(-50%);">A</div>
<div class="r" style="left:128.00px;top:260.00px;width:1.00px;height:24.00px;background:#c0c0c0;"></div>
<div class="t" style="left:168.50px;top:265px;font-size:17.20px;color:#222;font-weight:normal;transform:translateX(-50%);">B</div>
<div class="r" style="left:209.00px;top:260.00px;width:1.00px;height:24.00px;background:#c0c0c0;"></div>
<div class="t" style="left:250.00px;top:265px;font-size:17.20px;color:#222;font-weight:normal;transform:translateX(-50%);">C</div>
<div class="r" style="left:291.00px;top:260.00px;width:1.00px;height:24.00px;background:#c0c0c0;"></div>
<div class="t" style="left:332.00px;top:265px;font-size:17.20px;color:#222;font-weight:normal;transform:translateX(-50%);">D</div>
<div class="r" style="left:373.00px;top:260.00px;width:1.00px;height:24.00px;background:#c0c0c0;"></div>
<div class="t" style="left:414.00px;top:265px;font-size:17.20px;color:#222;font-weight:normal;transform:translateX(-50%);">E</div>
<div class="r" style="left:455.00px;top:260.00px;width:1.00px;height:24.00px;background:#c0c0c0;"></div>
<div class="t" style="left:496.00px;top:265px;font-size:17.20px;color:#222;font-weight:normal;transform:translateX(-50%);">F</div>
<div class="r" style="left:537.00px;top:260.00px;width:1.00px;height:24.00px;background:#c0c0c0;"></div>
<div class="t" style="left:578.00px;top:265px;font-size:17.20px;color:#222;font-weight:normal;transform:translateX(-50%);">G</div>
<div class="r" style="left:619.00px;top:260.00px;width:1.00px;height:24.00px;background:#c0c0c0;"></div>
<div class="t" style="left:659.50px;top:265px;font-size:17.20px;color:#222;font-weight:normal;transform:translateX(-50%);">H</div>
<div class="r" style="left:700.00px;top:260.00px;width:1.00px;height:24.00px;background:#c0c0c0;"></div>
<div class="t" style="left:741.00px;top:265px;font-size:17.20px;color:#222;font-weight:normal;transform:translateX(-50%);">I</div>
<div class="r" style="left:782.00px;top:260.00px;width:1.00px;height:24.00px;background:#c0c0c0;"></div>
<div class="t" style="left:823.00px;top:265px;font-size:17.20px;color:#222;font-weight:normal;transform:translateX(-50%);">J</div>
<div class="r" style="left:864.00px;top:260.00px;width:1.00px;height:24.00px;background:#c0c0c0;"></div>
<div class="t" style="left:919.50px;top:265px;font-size:17.20px;color:#222;font-weight:normal;transform:translateX(-50%);">K</div>
<div class="r" style="left:975.00px;top:260.00px;width:1.00px;height:24.00px;background:#c0c0c0;"></div>
<div class="t" style="left:1016.00px;top:265px;font-size:17.20px;color:#222;font-weight:normal;transform:translateX(-50%);">L</div>
<div class="r" style="left:1057.00px;top:260.00px;width:1.00px;height:24.00px;background:#c0c0c0;"></div>
<div class="t" style="left:1266.50px;top:265px;font-size:17.20px;color:#222;font-weight:normal;transform:translateX(-50%);">M</div>
<div class="r" style="left:1476.00px;top:260.00px;width:1.00px;height:24.00px;background:#c0c0c0;"></div>
<div class="t" style="left:1530.00px;top:265px;font-size:17.20px;color:#222;font-weight:normal;transform:translateX(-50%);">N</div>
<div class="r" style="left:1584.00px;top:260.00px;width:1.00px;height:24.00px;background:#c0c0c0;"></div>
<div class="r" style="left:0.00px;top:283.00px;width:1600.00px;height:1.00px;background:#c2c2c2;"></div>
<div class="r" style="left:33.00px;top:260.00px;width:1.00px;height:600.00px;background:#a9a9a9;"></div>
<div class="r" style="left:34.00px;top:308.00px;width:1566.00px;height:1.00px;background:#dcdcdc;"></div>
<div class="r" style="left:0.00px;top:308.00px;width:33.00px;height:1.00px;background:#bdbdbd;"></div>
<div class="r" style="left:34.00px;top:333.00px;width:1566.00px;height:1.00px;background:#dcdcdc;"></div>
<div class="r" style="left:0.00px;top:333.00px;width:33.00px;height:1.00px;background:#bdbdbd;"></div>
<div class="r" style="left:34.00px;top:358.00px;width:1566.00px;height:1.00px;background:#dcdcdc;"></div>
<div class="r" style="left:0.00px;top:358.00px;width:33.00px;height:1.00px;background:#bdbdbd;"></div>
<div class="r" style="left:34.00px;top:382.00px;width:1566.00px;height:1.00px;background:#dcdcdc;"></div>
<div class="r" style="left:0.00px;top:382.00px;width:33.00px;height:1.00px;background:#bdbdbd;"></div>
<div class="r" style="left:34.00px;top:407.00px;width:1566.00px;height:1.00px;background:#dcdcdc;"></div>
<div class="r" style="left:0.00px;top:407.00px;width:33.00px;height:1.00px;background:#bdbdbd;"></div>
<div class="r" style="left:34.00px;top:432.00px;width:1566.00px;height:1.00px;background:#dcdcdc;"></div>
<div class="r" style="left:0.00px;top:432.00px;width:33.00px;height:1.00px;background:#bdbdbd;"></div>
<div class="r" style="left:34.00px;top:457.00px;width:1566.00px;height:1.00px;background:#dcdcdc;"></div>
<div class="r" style="left:0.00px;top:457.00px;width:33.00px;height:1.00px;background:#bdbdbd;"></div>
<div class="r" style="left:34.00px;top:481.00px;width:1566.00px;height:1.00px;background:#dcdcdc;"></div>
<div class="r" style="left:0.00px;top:481.00px;width:33.00px;height:1.00px;background:#bdbdbd;"></div>
<div class="r" style="left:34.00px;top:506.00px;width:1566.00px;height:1.00px;background:#dcdcdc;"></div>
<div class="r" style="left:0.00px;top:506.00px;width:33.00px;height:1.00px;background:#bdbdbd;"></div>
<div class="r" style="left:34.00px;top:531.00px;width:1566.00px;height:1.00px;background:#dcdcdc;"></div>
<div class="r" style="left:0.00px;top:531.00px;width:33.00px;height:1.00px;background:#bdbdbd;"></div>
<div class="r" style="left:34.00px;top:555.00px;width:1566.00px;height:1.00px;background:#dcdcdc;"></div>
<div class="r" style="left:0.00px;top:555.00px;width:33.00px;height:1.00px;background:#bdbdbd;"></div>
<div class="r" style="left:34.00px;top:580.00px;width:1566.00px;height:1.00px;background:#dcdcdc;"></div>
<div class="r" style="left:0.00px;top:580.00px;width:33.00px;height:1.00px;background:#bdbdbd;"></div>
<div class="r" style="left:34.00px;top:605.00px;width:1566.00px;height:1.00px;background:#dcdcdc;"></div>
<div class="r" style="left:0.00px;top:605.00px;width:33.00px;height:1.00px;background:#bdbdbd;"></div>
<div class="r" style="left:34.00px;top:630.00px;width:1566.00px;height:1.00px;background:#dcdcdc;"></div>
<div class="r" style="left:0.00px;top:630.00px;width:33.00px;height:1.00px;background:#bdbdbd;"></div>
<div class="r" style="left:34.00px;top:654.00px;width:1566.00px;height:1.00px;background:#dcdcdc;"></div>
<div class="r" style="left:0.00px;top:654.00px;width:33.00px;height:1.00px;background:#bdbdbd;"></div>
<div class="r" style="left:34.00px;top:679.00px;width:1566.00px;height:1.00px;background:#dcdcdc;"></div>
<div class="r" style="left:0.00px;top:679.00px;width:33.00px;height:1.00px;background:#bdbdbd;"></div>
<div class="r" style="left:34.00px;top:704.00px;width:1566.00px;height:1.00px;background:#dcdcdc;"></div>
<div class="r" style="left:0.00px;top:704.00px;width:33.00px;height:1.00px;background:#bdbdbd;"></div>
<div class="r" style="left:34.00px;top:728.00px;width:1566.00px;height:1.00px;background:#dcdcdc;"></div>
<div class="r" style="left:0.00px;top:728.00px;width:33.00px;height:1.00px;background:#bdbdbd;"></div>
<div class="r" style="left:34.00px;top:753.00px;width:1566.00px;height:1.00px;background:#dcdcdc;"></div>
<div class="r" style="left:0.00px;top:753.00px;width:33.00px;height:1.00px;background:#bdbdbd;"></div>
<div class="r" style="left:34.00px;top:778.00px;width:1566.00px;height:1.00px;background:#dcdcdc;"></div>
<div class="r" style="left:0.00px;top:778.00px;width:33.00px;height:1.00px;background:#bdbdbd;"></div>
<div class="r" style="left:34.00px;top:802.00px;width:1566.00px;height:1.00px;background:#dcdcdc;"></div>
<div class="r" style="left:0.00px;top:802.00px;width:33.00px;height:1.00px;background:#bdbdbd;"></div>
<div class="r" style="left:34.00px;top:827.00px;width:1566.00px;height:1.00px;background:#dcdcdc;"></div>
<div class="r" style="left:0.00px;top:827.00px;width:33.00px;height:1.00px;background:#bdbdbd;"></div>
<div class="r" style="left:34.00px;top:851.00px;width:1566.00px;height:1.00px;background:#dcdcdc;"></div>
<div class="r" style="left:0.00px;top:851.00px;width:33.00px;height:1.00px;background:#bdbdbd;"></div>
<div class="r" style="left:34.00px;top:877.00px;width:1566.00px;height:1.00px;background:#dcdcdc;"></div>
<div class="r" style="left:0.00px;top:877.00px;width:33.00px;height:1.00px;background:#bdbdbd;"></div>
<div class="r" style="left:34.00px;top:901.00px;width:1566.00px;height:1.00px;background:#dcdcdc;"></div>
<div class="r" style="left:0.00px;top:901.00px;width:33.00px;height:1.00px;background:#bdbdbd;"></div>
<div class="r" style="left:128.00px;top:284.00px;width:1.00px;height:576.00px;background:#dcdcdc;"></div>
<div class="r" style="left:209.00px;top:284.00px;width:1.00px;height:576.00px;background:#dcdcdc;"></div>
<div class="r" style="left:291.00px;top:284.00px;width:1.00px;height:576.00px;background:#dcdcdc;"></div>
<div class="r" style="left:373.00px;top:284.00px;width:1.00px;height:576.00px;background:#dcdcdc;"></div>
<div class="r" style="left:455.00px;top:284.00px;width:1.00px;height:576.00px;background:#dcdcdc;"></div>
<div class="r" style="left:537.00px;top:284.00px;width:1.00px;height:576.00px;background:#dcdcdc;"></div>
<div class="r" style="left:619.00px;top:284.00px;width:1.00px;height:576.00px;background:#dcdcdc;"></div>
<div class="r" style="left:700.00px;top:284.00px;width:1.00px;height:576.00px;background:#dcdcdc;"></div>
<div class="r" style="left:782.00px;top:284.00px;width:1.00px;height:576.00px;background:#dcdcdc;"></div>
<div class="r" style="left:864.00px;top:284.00px;width:1.00px;height:576.00px;background:#dcdcdc;"></div>
<div class="r" style="left:975.00px;top:284.00px;width:1.00px;height:576.00px;background:#dcdcdc;"></div>
<div class="r" style="left:1057.00px;top:284.00px;width:1.00px;height:576.00px;background:#dcdcdc;"></div>
<div class="r" style="left:1476.00px;top:284.00px;width:1.00px;height:576.00px;background:#dcdcdc;"></div>
<div class="r" style="left:1584.00px;top:284.00px;width:1.00px;height:576.00px;background:#dcdcdc;"></div>
<div class="r" style="left:34.00px;top:284.00px;width:941.00px;height:24.00px;background:#5b9bd5;"></div>
<div class="r" style="left:34.00px;top:307.00px;width:941.00px;height:2.00px;background:#203864;"></div>
<div class="r" style="left:34px;top:284px;width:94px;height:24px;overflow:hidden">
<div class="t" style="left:2px;top:5px;font-size:17.20px;color:#fff;font-weight:bold;letter-spacing:0px">dateRep</div></div>
<div class="r" style="left:128.00px;top:284.00px;width:1.00px;height:24.00px;background:#26456e;"></div>
<div class="r" style="left:129px;top:284px;width:80px;height:24px;overflow:hidden">
<div class="t" style="left:2px;top:5px;font-size:17.20px;color:#fff;font-weight:bold;letter-spacing:0px">day</div></div>
<div class="r" style="left:209.00px;top:284.00px;width:1.00px;height:24.00px;background:#26456e;"></div>
<div class="r" style="left:210px;top:284px;width:81px;height:24px;overflow:hidden">
<div class="t" style="left:2px;top:5px;font-size:17.20px;color:#fff;font-weight:bold;letter-spacing:0px">month</div></div>
<div class="r" style="left:291.00px;top:284.00px;width:1.00px;height:24.00px;background:#26456e;"></div>
<div class="r" style="left:292px;top:284px;width:81px;height:24px;overflow:hidden">
<div class="t" style="left:2px;top:5px;font-size:17.20px;color:#fff;font-weight:bold;letter-spacing:0px">year</div></div>
<div class="r" style="left:373.00px;top:284.00px;width:1.00px;height:24.00px;background:#26456e;"></div>
<div class="r" style="left:374px;top:284px;width:81px;height:24px;overflow:hidden">
<div class="t" style="left:2px;top:5px;font-size:17.20px;color:#fff;font-weight:bold;letter-spacing:0px">cases</div></div>
<div class="r" style="left:455.00px;top:284.00px;width:1.00px;height:24.00px;background:#26456e;"></div>
<div class="r" style="left:456px;top:284px;width:81px;height:24px;overflow:hidden">
<div class="t" style="left:2px;top:5px;font-size:17.20px;color:#fff;font-weight:bold;letter-spacing:0px">deaths</div></div>
<div class="r" style="left:537.00px;top:284.00px;width:1.00px;height:24.00px;background:#26456e;"></div>
<div class="r" style="left:538px;top:284px;width:81px;height:24px;overflow:hidden">
<div class="t" style="left:2px;top:5px;font-size:17.20px;color:#fff;font-weight:bold;letter-spacing:0px">countriesAndTerritories</div></div>
<div class="r" style="left:619.00px;top:284.00px;width:1.00px;height:24.00px;background:#26456e;"></div>
<div class="r" style="left:620px;top:284px;width:80px;height:24px;overflow:hidden">
<div class="t" style="left:2px;top:5px;font-size:17.20px;color:#fff;font-weight:bold;letter-spacing:0px">geoId</div></div>
<div class="r" style="left:700.00px;top:284.00px;width:1.00px;height:24.00px;background:#26456e;"></div>
<div class="r" style="left:701px;top:284px;width:81px;height:24px;overflow:hidden">
<div class="t" style="left:2px;top:5px;font-size:17.20px;color:#fff;font-weight:bold;letter-spacing:0px">countryterritoryCode</div></div>
<div class="r" style="left:782.00px;top:284.00px;width:1.00px;height:24.00px;background:#26456e;"></div>
<div class="r" style="left:783px;top:284px;width:81px;height:24px;overflow:hidden">
<div class="t" style="left:2px;top:5px;font-size:17.20px;color:#fff;font-weight:bold;letter-spacing:0px">popData2019</div></div>
<div class="r" style="left:864.00px;top:284.00px;width:1.00px;height:24.00px;background:#26456e;"></div>
<div class="r" style="left:865px;top:284px;width:110px;height:24px;overflow:hidden">
<div class="t" style="left:2px;top:5px;font-size:17.20px;color:#fff;font-weight:bold;letter-spacing:-0.25px">continentExp</div></div>
<div class="t" style="left:38.00px;top:314px;font-size:17.20px;color:#111;font-weight:normal;">12-08-2020</div>
<div class="t" style="left:207.00px;top:314px;font-size:17.20px;color:#111;font-weight:normal;transform:translateX(-100%);">12</div>
<div class="t" style="left:289.00px;top:314px;font-size:17.20px;color:#111;font-weight:normal;transform:translateX(-100%);">8</div>
<div class="t" style="left:371.00px;top:314px;font-size:17.20px;color:#111;font-weight:normal;transform:translateX(-100%);">2020</div>
<div class="t" style="left:453.00px;top:314px;font-size:17.20px;color:#111;font-weight:normal;transform:translateX(-100%);">215</div>
<div class="t" style="left:535.00px;top:314px;font-size:17.20px;color:#111;font-weight:normal;transform:translateX(-100%);">32</div>
<div class="r" style="left:538px;top:309px;width:81px;height:24px;overflow:hidden">
<div class="t" style="left:2px;top:5px;font-size:17.20px;color:#111">Afghanistan</div></div>
<div class="t" style="left:622.00px;top:314px;font-size:17.20px;color:#111;font-weight:normal;transform:scaleX(0.9);transform-origin:left top;">AF</div>
<div class="t" style="left:703.00px;top:314px;font-size:17.20px;color:#111;font-weight:normal;transform:scaleX(0.9);transform-origin:left top;">AFG</div>
<div class="t" style="left:862.00px;top:314px;font-size:17.20px;color:#111;font-weight:normal;transform:translateX(-100%);">38041757</div>
<div class="t" style="left:867.00px;top:314px;font-size:17.20px;color:#111;font-weight:normal;transform:scaleX(0.95);transform-origin:left top;">Asia</div>
<div class="t" style="left:17.50px;top:314px;font-size:17.20px;color:#333;font-weight:normal;transform:translateX(-50%);">2</div>
<div class="t" style="left:38.00px;top:339px;font-size:17.20px;color:#111;font-weight:normal;">11-08-2020</div>
<div class="t" style="left:207.00px;top:339px;font-size:17.20px;color:#111;font-weight:normal;transform:translateX(-100%);">11</div>
<div class="t" style="left:289.00px;top:339px;font-size:17.20px;color:#111;font-weight:normal;transform:translateX(-100%);">8</div>
<div class="t" style="left:371.00px;top:339px;font-size:17.20px;color:#111;font-weight:normal;transform:translateX(-100%);">2020</div>
<div class="t" style="left:453.00px;top:339px;font-size:17.20px;color:#111;font-weight:normal;transform:translateX(-100%);">0</div>
<div class="t" style="left:535.00px;top:339px;font-size:17.20px;color:#111;font-weight:normal;transform:translateX(-100%);">0</div>
<div class="r" style="left:538px;top:334px;width:81px;height:24px;overflow:hidden">
<div class="t" style="left:2px;top:5px;font-size:17.20px;color:#111">Afghanistan</div></div>
<div class="t" style="left:622.00px;top:339px;font-size:17.20px;color:#111;font-weight:normal;transform:scaleX(0.9);transform-origin:left top;">AF</div>
<div class="t" style="left:703.00px;top:339px;font-size:17.20px;color:#111;font-weight:normal;transform:scaleX(0.9);transform-origin:left top;">AFG</div>
<div class="t" style="left:862.00px;top:339px;font-size:17.20px;color:#111;font-weight:normal;transform:translateX(-100%);">38041757</div>
<div class="t" style="left:867.00px;top:339px;font-size:17.20px;color:#111;font-weight:normal;transform:scaleX(0.95);transform-origin:left top;">Asia</div>
<div class="t" style="left:17.50px;top:339px;font-size:17.20px;color:#333;font-weight:normal;transform:translateX(-50%);">3</div>
<div class="t" style="left:38.00px;top:363px;font-size:17.20px;color:#111;font-weight:normal;">10-08-2020</div>
<div class="t" style="left:207.00px;top:363px;font-size:17.20px;color:#111;font-weight:normal;transform:translateX(-100%);">10</div>
<div class="t" style="left:289.00px;top:363px;font-size:17.20px;color:#111;font-weight:normal;transform:translateX(-100%);">8</div>
<div class="t" style="left:371.00px;top:363px;font-size:17.20px;color:#111;font-weight:normal;transform:translateX(-100%);">2020</div>
<div class="t" style="left:453.00px;top:363px;font-size:17.20px;color:#111;font-weight:normal;transform:translateX(-100%);">0</div>
<div class="t" style="left:535.00px;top:363px;font-size:17.20px;color:#111;font-weight:normal;transform:translateX(-100%);">0</div>
<div class="r" style="left:538px;top:359px;width:81px;height:24px;overflow:hidden">
<div class="t" style="left:2px;top:4px;font-size:17.20px;color:#111">Afghanistan</div></div>
<div class="t" style="left:622.00px;top:363px;font-size:17.20px;color:#111;font-weight:normal;transform:scaleX(0.9);transform-origin:left top;">AF</div>
<div class="t" style="left:703.00px;top:363px;font-size:17.20px;color:#111;font-weight:normal;transform:scaleX(0.9);transform-origin:left top;">AFG</div>
<div class="t" style="left:862.00px;top:363px;font-size:17.20px;color:#111;font-weight:normal;transform:translateX(-100%);">38041757</div>
<div class="t" style="left:867.00px;top:363px;font-size:17.20px;color:#111;font-weight:normal;transform:scaleX(0.95);transform-origin:left top;">Asia</div>
<div class="t" style="left:17.50px;top:363px;font-size:17.20px;color:#333;font-weight:normal;transform:translateX(-50%);">4</div>
<div class="t" style="left:38.00px;top:388px;font-size:17.20px;color:#111;font-weight:normal;">09-08-2020</div>
<div class="t" style="left:207.00px;top:388px;font-size:17.20px;color:#111;font-weight:normal;transform:translateX(-100%);">9</div>
<div class="t" style="left:289.00px;top:388px;font-size:17.20px;color:#111;font-weight:normal;transform:translateX(-100%);">8</div>
<div class="t" style="left:371.00px;top:388px;font-size:17.20px;color:#111;font-weight:normal;transform:translateX(-100%);">2020</div>
<div class="t" style="left:453.00px;top:388px;font-size:17.20px;color:#111;font-weight:normal;transform:translateX(-100%);">39</div>
<div class="t" style="left:535.00px;top:388px;font-size:17.20px;color:#111;font-weight:normal;transform:translateX(-100%);">5</div>
<div class="r" style="left:538px;top:383px;width:81px;height:24px;overflow:hidden">
<div class="t" style="left:2px;top:5px;font-size:17.20px;color:#111">Afghanistan</div></div>
<div class="t" style="left:622.00px;top:388px;font-size:17.20px;color:#111;font-weight:normal;transform:scaleX(0.9);transform-origin:left top;">AF</div>
<div class="t" style="left:703.00px;top:388px;font-size:17.20px;color:#111;font-weight:normal;transform:scaleX(0.9);transform-origin:left top;">AFG</div>
<div class="t" style="left:862.00px;top:388px;font-size:17.20px;color:#111;font-weight:normal;transform:translateX(-100%);">38041757</div>
<div class="t" style="left:867.00px;top:388px;font-size:17.20px;color:#111;font-weight:normal;transform:scaleX(0.95);transform-origin:left top;">Asia</div>
<div class="t" style="left:17.50px;top:388px;font-size:17.20px;color:#333;font-weight:normal;transform:translateX(-50%);">5</div>
<div class="t" style="left:38.00px;top:413px;font-size:17.20px;color:#111;font-weight:normal;">08-08-2020</div>
<div class="t" style="left:207.00px;top:413px;font-size:17.20px;color:#111;font-weight:normal;transform:translateX(-100%);">8</div>
<div class="t" style="left:289.00px;top:413px;font-size:17.20px;color:#111;font-weight:normal;transform:translateX(-100%);">8</div>
<div class="t" style="left:371.00px;top:413px;font-size:17.20px;color:#111;font-weight:normal;transform:translateX(-100%);">2020</div>
<div class="t" style="left:453.00px;top:413px;font-size:17.20px;color:#111;font-weight:normal;transform:translateX(-100%);">78</div>
<div class="t" style="left:535.00px;top:413px;font-size:17.20px;color:#111;font-weight:normal;transform:translateX(-100%);">9</div>
<div class="r" style="left:538px;top:408px;width:81px;height:24px;overflow:hidden">
<div class="t" style="left:2px;top:5px;font-size:17.20px;color:#111">Afghanistan</div></div>
<div class="t" style="left:622.00px;top:413px;font-size:17.20px;color:#111;font-weight:normal;transform:scaleX(0.9);transform-origin:left top;">AF</div>
<div class="t" style="left:703.00px;top:413px;font-size:17.20px;color:#111;font-weight:normal;transform:scaleX(0.9);transform-origin:left top;">AFG</div>
<div class="t" style="left:862.00px;top:413px;font-size:17.20px;color:#111;font-weight:normal;transform:translateX(-100%);">38041757</div>
<div class="t" style="left:867.00px;top:413px;font-size:17.20px;color:#111;font-weight:normal;transform:scaleX(0.95);transform-origin:left top;">Asia</div>
<div class="t" style="left:17.50px;top:413px;font-size:17.20px;color:#333;font-weight:normal;transform:translateX(-50%);">6</div>
<div class="t" style="left:38.00px;top:437px;font-size:17.20px;color:#111;font-weight:normal;">07-08-2020</div>
<div class="t" style="left:207.00px;top:437px;font-size:17.20px;color:#111;font-weight:normal;transform:translateX(-100%);">7</div>
<div class="t" style="left:289.00px;top:437px;font-size:17.20px;color:#111;font-weight:normal;transform:translateX(-100%);">8</div>
<div class="t" style="left:371.00px;top:437px;font-size:17.20px;color:#111;font-weight:normal;transform:translateX(-100%);">2020</div>
<div class="t" style="left:453.00px;top:437px;font-size:17.20px;color:#111;font-weight:normal;transform:translateX(-100%);">41</div>
<div class="t" style="left:535.00px;top:437px;font-size:17.20px;color:#111;font-weight:normal;transform:translateX(-100%);">0</div>
<div class="r" style="left:538px;top:433px;width:81px;height:24px;overflow:hidden">
<div class="t" style="left:2px;top:4px;font-size:17.20px;color:#111">Afghanistan</div></div>
<div class="t" style="left:622.00px;top:437px;font-size:17.20px;color:#111;font-weight:normal;transform:scaleX(0.9);transform-origin:left top;">AF</div>
<div class="t" style="left:703.00px;top:437px;font-size:17.20px;color:#111;font-weight:normal;transform:scaleX(0.9);transform-origin:left top;">AFG</div>
<div class="t" style="left:862.00px;top:437px;font-size:17.20px;color:#111;font-weight:normal;transform:translateX(-100%);">38041757</div>
<div class="t" style="left:867.00px;top:437px;font-size:17.20px;color:#111;font-weight:normal;transform:scaleX(0.95);transform-origin:left top;">Asia</div>
<div class="t" style="left:17.50px;top:437px;font-size:17.20px;color:#333;font-weight:normal;transform:translateX(-50%);">7</div>
<div class="t" style="left:38.00px;top:462px;font-size:17.20px;color:#111;font-weight:normal;">06-08-2020</div>
<div class="t" style="left:207.00px;top:462px;font-size:17.20px;color:#111;font-weight:normal;transform:translateX(-100%);">6</div>
<div class="t" style="left:289.00px;top:462px;font-size:17.20px;color:#111;font-weight:normal;transform:translateX(-100%);">8</div>
<div class="t" style="left:371.00px;top:462px;font-size:17.20px;color:#111;font-weight:normal;transform:translateX(-100%);">2020</div>
<div class="t" style="left:453.00px;top:462px;font-size:17.20px;color:#111;font-weight:normal;transform:translateX(-100%);">67</div>
<div class="t" style="left:535.00px;top:462px;font-size:17.20px;color:#111;font-weight:normal;transform:translateX(-100%);">4</div>
<div class="r" style="left:538px;top:458px;width:81px;height:24px;overflow:hidden">
<div class="t" style="left:2px;top:4px;font-size:17.20px;color:#111">Afghanistan</div></div>
<div class="t" style="left:622.00px;top:462px;font-size:17.20px;color:#111;font-weight:normal;transform:scaleX(0.9);transform-origin:left top;">AF</div>
<div class="t" style="left:703.00px;top:462px;font-size:17.20px;color:#111;font-weight:normal;transform:scaleX(0.9);transform-origin:left top;">AFG</div>
<div class="t" style="left:862.00px;top:462px;font-size:17.20px;color:#111;font-weight:normal;transform:translateX(-100%);">38041757</div>
<div class="t" style="left:867.00px;top:462px;font-size:17.20px;color:#111;font-weight:normal;transform:scaleX(0.95);transform-origin:left top;">Asia</div>
<div class="t" style="left:17.50px;top:462px;font-size:17.20px;color:#333;font-weight:normal;transform:translateX(-50%);">8</div>
<div class="t" style="left:38.00px;top:487px;font-size:17.20px;color:#111;font-weight:normal;">05-08-2020</div>
<div class="t" style="left:207.00px;top:487px;font-size:17.20px;color:#111;font-weight:normal;transform:translateX(-100%);">5</div>
<div class="t" style="left:289.00px;top:487px;font-size:17.20px;color:#111;font-weight:normal;transform:translateX(-100%);">8</div>
<div class="t" style="left:371.00px;top:487px;font-size:17.20px;color:#111;font-weight:normal;transform:translateX(-100%);">2020</div>
<div class="t" style="left:453.00px;top:487px;font-size:17.20px;color:#111;font-weight:normal;transform:translateX(-100%);">82</div>
<div class="t" style="left:535.00px;top:487px;font-size:17.20px;color:#111;font-weight:normal;transform:translateX(-100%);">6</div>
<div class="r" style="left:538px;top:482px;width:81px;height:24px;overflow:hidden">
<div class="t" style="left:2px;top:5px;font-size:17.20px;color:#111">Afghanistan</div></div>
<div class="t" style="left:622.00px;top:487px;font-size:17.20px;color:#111;font-weight:normal;transform:scaleX(0.9);transform-origin:left top;">AF</div>
<div class="t" style="left:703.00px;top:487px;font-size:17.20px;color:#111;font-weight:normal;transform:scaleX(0.9);transform-origin:left top;">AFG</div>
<div class="t" style="left:862.00px;top:487px;font-size:17.20px;color:#111;font-weight:normal;transform:translateX(-100%);">38041757</div>
<div class="t" style="left:867.00px;top:487px;font-size:17.20px;color:#111;font-weight:normal;transform:scaleX(0.95);transform-origin:left top;">Asia</div>
<div class="t" style="left:17.50px;top:487px;font-size:17.20px;color:#333;font-weight:normal;transform:translateX(-50%);">9</div>
<div class="t" style="left:38.00px;top:512px;font-size:17.20px;color:#111;font-weight:normal;">04-08-2020</div>
<div class="t" style="left:207.00px;top:512px;font-size:17.20px;color:#111;font-weight:normal;transform:translateX(-100%);">4</div>
<div class="t" style="left:289.00px;top:512px;font-size:17.20px;color:#111;font-weight:normal;transform:translateX(-100%);">8</div>
<div class="t" style="left:371.00px;top:512px;font-size:17.20px;color:#111;font-weight:normal;transform:translateX(-100%);">2020</div>
<div class="t" style="left:453.00px;top:512px;font-size:17.20px;color:#111;font-weight:normal;transform:translateX(-100%);">37</div>
<div class="t" style="left:535.00px;top:512px;font-size:17.20px;color:#111;font-weight:normal;transform:translateX(-100%);">4</div>
<div class="r" style="left:538px;top:507px;width:81px;height:24px;overflow:hidden">
<div class="t" style="left:2px;top:5px;font-size:17.20px;color:#111">Afghanistan</div></div>
<div class="t" style="left:622.00px;top:512px;font-size:17.20px;color:#111;font-weight:normal;transform:scaleX(0.9);transform-origin:left top;">AF</div>
<div class="t" style="left:703.00px;top:512px;font-size:17.20px;color:#111;font-weight:normal;transform:scaleX(0.9);transform-origin:left top;">AFG</div>
<div class="t" style="left:862.00px;top:512px;font-size:17.20px;color:#111;font-weight:normal;transform:translateX(-100%);">38041757</div>
<div class="t" style="left:867.00px;top:512px;font-size:17.20px;color:#111;font-weight:normal;transform:scaleX(0.95);transform-origin:left top;">Asia</div>
<div class="t" style="left:17.50px;top:512px;font-size:17.20px;color:#333;font-weight:normal;transform:translateX(-50%);">10</div>
<div class="t" style="left:38.00px;top:536px;font-size:17.20px;color:#111;font-weight:normal;">03-08-2020</div>
<div class="t" style="left:207.00px;top:536px;font-size:17.20px;color:#111;font-weight:normal;transform:translateX(-100%);">3</div>
<div class="t" style="left:289.00px;top:536px;font-size:17.20px;color:#111;font-weight:normal;transform:translateX(-100%);">8</div>
<div class="t" style="left:371.00px;top:536px;font-size:17.20px;color:#111;font-weight:normal;transform:translateX(-100%);">2020</div>
<div class="t" style="left:453.00px;top:536px;font-size:17.20px;color:#111;font-weight:normal;transform:translateX(-100%);">0</div>
<div class="t" style="left:535.00px;top:536px;font-size:17.20px;color:#111;font-weight:normal;transform:translateX(-100%);">1</div>
<div class="r" style="left:538px;top:532px;width:81px;height:24px;overflow:hidden">
<div class="t" style="left:2px;top:4px;font-size:17.20px;color:#111">Afghanistan</div></div>
<div class="t" style="left:622.00px;top:536px;font-size:17.20px;color:#111;font-weight:normal;transform:scaleX(0.9);transform-origin:left top;">AF</div>
<div class="t" style="left:703.00px;top:536px;font-size:17.20px;color:#111;font-weight:normal;transform:scaleX(0.9);transform-origin:left top;">AFG</div>
<div class="t" style="left:862.00px;top:536px;font-size:17.20px;color:#111;font-weight:normal;transform:translateX(-100%);">38041757</div>
<div class="t" style="left:867.00px;top:536px;font-size:17.20px;color:#111;font-weight:normal;transform:scaleX(0.95);transform-origin:left top;">Asia</div>
<div class="t" style="left:17.50px;top:536px;font-size:17.20px;color:#333;font-weight:normal;transform:translateX(-50%);">11</div>
<div class="t" style="left:38.00px;top:561px;font-size:17.20px;color:#111;font-weight:normal;">02-08-2020</div>
<div class="t" style="left:207.00px;top:561px;font-size:17.20px;color:#111;font-weight:normal;transform:translateX(-100%);">2</div>
<div class="t" style="left:289.00px;top:561px;font-size:17.20px;color:#111;font-weight:normal;transform:translateX(-100%);">8</div>
<div class="t" style="left:371.00px;top:561px;font-size:17.20px;color:#111;font-weight:normal;transform:translateX(-100%);">2020</div>
<div class="t" style="left:453.00px;top:561px;font-size:17.20px;color:#111;font-weight:normal;transform:translateX(-100%);">0</div>
<div class="t" style="left:535.00px;top:561px;font-size:17.20px;color:#111;font-weight:normal;transform:translateX(-100%);">0</div>
<div class="r" style="left:538px;top:556px;width:81px;height:24px;overflow:hidden">
<div class="t" style="left:2px;top:5px;font-size:17.20px;color:#111">Afghanistan</div></div>
<div class="t" style="left:622.00px;top:561px;font-size:17.20px;color:#111;font-weight:normal;transform:scaleX(0.9);transform-origin:left top;">AF</div>
<div class="t" style="left:703.00px;top:561px;font-size:17.20px;color:#111;font-weight:normal;transform:scaleX(0.9);transform-origin:left top;">AFG</div>
<div class="t" style="left:862.00px;top:561px;font-size:17.20px;color:#111;font-weight:normal;transform:translateX(-100%);">38041757</div>
<div class="t" style="left:867.00px;top:561px;font-size:17.20px;color:#111;font-weight:normal;transform:scaleX(0.95);transform-origin:left top;">Asia</div>
<div class="t" style="left:17.50px;top:561px;font-size:17.20px;color:#333;font-weight:normal;transform:translateX(-50%);">12</div>
<div class="t" style="left:38.00px;top:586px;font-size:17.20px;color:#111;font-weight:normal;">01-08-2020</div>
<div class="t" style="left:207.00px;top:586px;font-size:17.20px;color:#111;font-weight:normal;transform:translateX(-100%);">1</div>
<div class="t" style="left:289.00px;top:586px;font-size:17.20px;color:#111;font-weight:normal;transform:translateX(-100%);">8</div>
<div class="t" style="left:371.00px;top:586px;font-size:17.20px;color:#111;font-weight:normal;transform:translateX(-100%);">2020</div>
<div class="t" style="left:453.00px;top:586px;font-size:17.20px;color:#111;font-weight:normal;transform:translateX(-100%);">168</div>
<div class="t" style="left:535.00px;top:586px;font-size:17.20px;color:#111;font-weight:normal;transform:translateX(-100%);">12</div>
<div class="r" style="left:538px;top:581px;width:81px;height:24px;overflow:hidden">
<div class="t" style="left:2px;top:5px;font-size:17.20px;color:#111">Afghanistan</div></div>
<div class="t" style="left:622.00px;top:586px;font-size:17.20px;color:#111;font-weight:normal;transform:scaleX(0.9);transform-origin:left top;">AF</div>
<div class="t" style="left:703.00px;top:586px;font-size:17.20px;color:#111;font-weight:normal;transform:scaleX(0.9);transform-origin:left top;">AFG</div>
<div class="t" style="left:862.00px;top:586px;font-size:17.20px;color:#111;font-weight:normal;transform:translateX(-100%);">38041757</div>
<div class="t" style="left:867.00px;top:586px;font-size:17.20px;color:#111;font-weight:normal;transform:scaleX(0.95);transform-origin:left top;">Asia</div>
<div class="t" style="left:17.50px;top:586px;font-size:17.20px;color:#333;font-weight:normal;transform:translateX(-50%);">13</div>
<div class="t" style="left:38.00px;top:610px;font-size:17.20px;color:#111;font-weight:normal;">31-07-2020</div>
<div class="t" style="left:207.00px;top:610px;font-size:17.20px;color:#111;font-weight:normal;transform:translateX(-100%);">31</div>
<div class="t" style="left:289.00px;top:610px;font-size:17.20px;color:#111;font-weight:normal;transform:translateX(-100%);">7</div>
<div class="t" style="left:371.00px;top:610px;font-size:17.20px;color:#111;font-weight:normal;transform:translateX(-100%);">2020</div>
<div class="t" style="left:453.00px;top:610px;font-size:17.20px;color:#111;font-weight:normal;transform:translateX(-100%);">71</div>
<div class="t" style="left:535.00px;top:610px;font-size:17.20px;color:#111;font-weight:normal;transform:translateX(-100%);">0</div>
<div class="r" style="left:538px;top:606px;width:81px;height:24px;overflow:hidden">
<div class="t" style="left:2px;top:4px;font-size:17.20px;color:#111">Afghanistan</div></div>
<div class="t" style="left:622.00px;top:610px;font-size:17.20px;color:#111;font-weight:normal;transform:scaleX(0.9);transform-origin:left top;">AF</div>
<div class="t" style="left:703.00px;top:610px;font-size:17.20px;color:#111;font-weight:normal;transform:scaleX(0.9);transform-origin:left top;">AFG</div>
<div class="t" style="left:862.00px;top:610px;font-size:17.20px;color:#111;font-weight:normal;transform:translateX(-100%);">38041757</div>
<div class="t" style="left:867.00px;top:610px;font-size:17.20px;color:#111;font-weight:normal;transform:scaleX(0.95);transform-origin:left top;">Asia</div>
<div class="t" style="left:17.50px;top:610px;font-size:17.20px;color:#333;font-weight:normal;transform:translateX(-50%);">14</div>
<div class="t" style="left:38.00px;top:635px;font-size:17.20px;color:#111;font-weight:normal;">30-07-2020</div>
<div class="t" style="left:207.00px;top:635px;font-size:17.20px;color:#111;font-weight:normal;transform:translateX(-100%);">30</div>
<div class="t" style="left:289.00px;top:635px;font-size:17.20px;color:#111;font-weight:normal;transform:translateX(-100%);">7</div>
<div class="t" style="left:371.00px;top:635px;font-size:17.20px;color:#111;font-weight:normal;transform:translateX(-100%);">2020</div>
<div class="t" style="left:453.00px;top:635px;font-size:17.20px;color:#111;font-weight:normal;transform:translateX(-100%);">0</div>
<div class="t" style="left:535.00px;top:635px;font-size:17.20px;color:#111;font-weight:normal;transform:translateX(-100%);">0</div>
<div class="r" style="left:538px;top:631px;width:81px;height:24px;overflow:hidden">
<div class="t" style="left:2px;top:4px;font-size:17.20px;color:#111">Afghanistan</div></div>
<div class="t" style="left:622.00px;top:635px;font-size:17.20px;color:#111;font-weight:normal;transform:scaleX(0.9);transform-origin:left top;">AF</div>
<div class="t" style="left:703.00px;top:635px;font-size:17.20px;color:#111;font-weight:normal;transform:scaleX(0.9);transform-origin:left top;">AFG</div>
<div class="t" style="left:862.00px;top:635px;font-size:17.20px;color:#111;font-weight:normal;transform:translateX(-100%);">38041757</div>
<div class="t" style="left:867.00px;top:635px;font-size:17.20px;color:#111;font-weight:normal;transform:scaleX(0.95);transform-origin:left top;">Asia</div>
<div class="t" style="left:17.50px;top:635px;font-size:17.20px;color:#333;font-weight:normal;transform:translateX(-50%);">15</div>
<div class="t" style="left:38.00px;top:660px;font-size:17.20px;color:#111;font-weight:normal;">29-07-2020</div>
<div class="t" style="left:207.00px;top:660px;font-size:17.20px;color:#111;font-weight:normal;transform:translateX(-100%);">29</div>
<div class="t" style="left:289.00px;top:660px;font-size:17.20px;color:#111;font-weight:normal;transform:translateX(-100%);">7</div>
<div class="t" style="left:371.00px;top:660px;font-size:17.20px;color:#111;font-weight:normal;transform:translateX(-100%);">2020</div>
<div class="t" style="left:453.00px;top:660px;font-size:17.20px;color:#111;font-weight:normal;transform:translateX(-100%);">103</div>
<div class="t" style="left:535.00px;top:660px;font-size:17.20px;color:#111;font-weight:normal;transform:translateX(-100%);">1</div>
<div class="r" style="left:538px;top:655px;width:81px;height:24px;overflow:hidden">
<div class="t" style="left:2px;top:5px;font-size:17.20px;color:#111">Afghanistan</div></div>
<div class="t" style="left:622.00px;top:660px;font-size:17.20px;color:#111;font-weight:normal;transform:scaleX(0.9);transform-origin:left top;">AF</div>
<div class="t" style="left:703.00px;top:660px;font-size:17.20px;color:#111;font-weight:normal;transform:scaleX(0.9);transform-origin:left top;">AFG</div>
<div class="t" style="left:862.00px;top:660px;font-size:17.20px;color:#111;font-weight:normal;transform:translateX(-100%);">38041757</div>
<div class="t" style="left:867.00px;top:660px;font-size:17.20px;color:#111;font-weight:normal;transform:scaleX(0.95);transform-origin:left top;">Asia</div>
<div class="t" style="left:17.50px;top:660px;font-size:17.20px;color:#333;font-weight:normal;transform:translateX(-50%);">16</div>
<div class="t" style="left:38.00px;top:685px;font-size:17.20px;color:#111;font-weight:normal;">28-07-2020</div>
<div class="t" style="left:207.00px;top:685px;font-size:17.20px;color:#111;font-weight:normal;transform:translateX(-100%);">28</div>
<div class="t" style="left:289.00px;top:685px;font-size:17.20px;color:#111;font-weight:normal;transform:translateX(-100%);">7</div>
<div class="t" style="left:371.00px;top:685px;font-size:17.20px;color:#111;font-weight:normal;transform:translateX(-100%);">2020</div>
<div class="t" style="left:453.00px;top:685px;font-size:17.20px;color:#111;font-weight:normal;transform:translateX(-100%);">105</div>
<div class="t" style="left:535.00px;top:685px;font-size:17.20px;color:#111;font-weight:normal;transform:translateX(-100%);">1</div>
<div class="r" style="left:538px;top:680px;width:81px;height:24px;overflow:hidden">
<div class="t" style="left:2px;top:5px;font-size:17.20px;color:#111">Afghanistan</div></div>
<div class="t" style="left:622.00px;top:685px;font-size:17.20px;color:#111;font-weight:normal;transform:scaleX(0.9);transform-origin:left top;">AF</div>
<div class="t" style="left:703.00px;top:685px;font-size:17.20px;color:#111;font-weight:normal;transform:scaleX(0.9);transform-origin:left top;">AFG</div>
<div class="t" style="left:862.00px;top:685px;font-size:17.20px;color:#111;font-weight:normal;transform:translateX(-100%);">38041757</div>
<div class="t" style="left:867.00px;top:685px;font-size:17.20px;color:#111;font-weight:normal;transform:scaleX(0.95);transform-origin:left top;">Asia</div>
<div class="t" style="left:17.50px;top:685px;font-size:17.20px;color:#333;font-weight:normal;transform:translateX(-50%);">17</div>
<div class="t" style="left:38.00px;top:709px;font-size:17.20px;color:#111;font-weight:normal;">27-07-2020</div>
<div class="t" style="left:207.00px;top:709px;font-size:17.20px;color:#111;font-weight:normal;transform:translateX(-100%);">27</div>
<div class="t" style="left:289.00px;top:709px;font-size:17.20px;color:#111;font-weight:normal;transform:translateX(-100%);">7</div>
<div class="t" style="left:371.00px;top:709px;font-size:17.20px;color:#111;font-weight:normal;transform:translateX(-100%);">2020</div>
<div class="t" style="left:453.00px;top:709px;font-size:17.20px;color:#111;font-weight:normal;transform:translateX(-100%);">106</div>
<div class="t" style="left:535.00px;top:709px;font-size:17.20px;color:#111;font-weight:normal;transform:translateX(-100%);">10</div>
<div class="r" style="left:538px;top:705px;width:81px;height:24px;overflow:hidden">
<div class="t" style="left:2px;top:4px;font-size:17.20px;color:#111">Afghanistan</div></div>
<div class="t" style="left:622.00px;top:709px;font-size:17.20px;color:#111;font-weight:normal;transform:scaleX(0.9);transform-origin:left top;">AF</div>
<div class="t" style="left:703.00px;top:709px;font-size:17.20px;color:#111;font-weight:normal;transform:scaleX(0.9);transform-origin:left top;">AFG</div>
<div class="t" style="left:862.00px;top:709px;font-size:17.20px;color:#111;font-weight:normal;transform:translateX(-100%);">38041757</div>
<div class="t" style="left:867.00px;top:709px;font-size:17.20px;color:#111;font-weight:normal;transform:scaleX(0.95);transform-origin:left top;">Asia</div>
<div class="t" style="left:17.50px;top:709px;font-size:17.20px;color:#333;font-weight:normal;transform:translateX(-50%);">18</div>
<div class="t" style="left:38.00px;top:734px;font-size:17.20px;color:#111;font-weight:normal;">26-07-2020</div>
<div class="t" style="left:207.00px;top:734px;font-size:17.20px;color:#111;font-weight:normal;transform:translateX(-100%);">26</div>
<div class="t" style="left:289.00px;top:734px;font-size:17.20px;color:#111;font-weight:normal;transform:translateX(-100%);">7</div>
<div class="t" style="left:371.00px;top:734px;font-size:17.20px;color:#111;font-weight:normal;transform:translateX(-100%);">2020</div>
<div class="t" style="left:453.00px;top:734px;font-size:17.20px;color:#111;font-weight:normal;transform:translateX(-100%);">121</div>
<div class="t" style="left:535.00px;top:734px;font-size:17.20px;color:#111;font-weight:normal;transform:translateX(-100%);">13</div>
<div class="r" style="left:538px;top:729px;width:81px;height:24px;overflow:hidden">
<div class="t" style="left:2px;top:5px;font-size:17.20px;color:#111">Afghanistan</div></div>
<div class="t" style="left:622.00px;top:734px;font-size:17.20px;color:#111;font-weight:normal;transform:scaleX(0.9);transform-origin:left top;">AF</div>
<div class="t" style="left:703.00px;top:734px;font-size:17.20px;color:#111;font-weight:normal;transform:scaleX(0.9);transform-origin:left top;">AFG</div>
<div class="t" style="left:862.00px;top:734px;font-size:17.20px;color:#111;font-weight:normal;transform:translateX(-100%);">38041757</div>
<div class="t" style="left:867.00px;top:734px;font-size:17.20px;color:#111;font-weight:normal;transform:scaleX(0.95);transform-origin:left top;">Asia</div>
<div class="t" style="left:17.50px;top:734px;font-size:17.20px;color:#333;font-weight:normal;transform:translateX(-50%);">19</div>
<div class="t" style="left:38.00px;top:759px;font-size:17.20px;color:#111;font-weight:normal;">25-07-2020</div>
<div class="t" style="left:207.00px;top:759px;font-size:17.20px;color:#111;font-weight:normal;transform:translateX(-100%);">25</div>
<div class="t" style="left:289.00px;top:759px;font-size:17.20px;color:#111;font-weight:normal;transform:translateX(-100%);">7</div>
<div class="t" style="left:371.00px;top:759px;font-size:17.20px;color:#111;font-weight:normal;transform:translateX(-100%);">2020</div>
<div class="t" style="left:453.00px;top:759px;font-size:17.20px;color:#111;font-weight:normal;transform:translateX(-100%);">108</div>
<div class="t" style="left:535.00px;top:759px;font-size:17.20px;color:#111;font-weight:normal;transform:translateX(-100%);">35</div>
<div class="r" style="left:538px;top:754px;width:81px;height:24px;overflow:hidden">
<div class="t" style="left:2px;top:5px;font-size:17.20px;color:#111">Afghanistan</div></div>
<div class="t" style="left:622.00px;top:759px;font-size:17.20px;color:#111;font-weight:normal;transform:scaleX(0.9);transform-origin:left top;">AF</div>
<div class="t" style="left:703.00px;top:759px;font-size:17.20px;color:#111;font-weight:normal;transform:scaleX(0.9);transform-origin:left top;">AFG</div>
<div class="t" style="left:862.00px;top:759px;font-size:17.20px;color:#111;font-weight:normal;transform:translateX(-100%);">38041757</div>
<div class="t" style="left:867.00px;top:759px;font-size:17.20px;color:#111;font-weight:normal;transform:scaleX(0.95);transform-origin:left top;">Asia</div>
<div class="t" style="left:17.50px;top:759px;font-size:17.20px;color:#333;font-weight:normal;transform:translateX(-50%);">20</div>
<div class="t" style="left:38.00px;top:783px;font-size:17.20px;color:#111;font-weight:normal;">24-07-2020</div>
<div class="t" style="left:207.00px;top:783px;font-size:17.20px;color:#111;font-weight:normal;transform:translateX(-100%);">24</div>
<div class="t" style="left:289.00px;top:783px;font-size:17.20px;color:#111;font-weight:normal;transform:translateX(-100%);">7</div>
<div class="t" style="left:371.00px;top:783px;font-size:17.20px;color:#111;font-weight:normal;transform:translateX(-100%);">2020</div>
<div class="t" style="left:453.00px;top:783px;font-size:17.20px;color:#111;font-weight:normal;transform:translateX(-100%);">13</div>
<div class="t" style="left:535.00px;top:783px;font-size:17.20px;color:#111;font-weight:normal;transform:translateX(-100%);">0</div>
<div class="r" style="left:538px;top:779px;width:81px;height:24px;overflow:hidden">
<div class="t" style="left:2px;top:4px;font-size:17.20px;color:#111">Afghanistan</div></div>
<div class="t" style="left:622.00px;top:783px;font-size:17.20px;color:#111;font-weight:normal;transform:scaleX(0.9);transform-origin:left top;">AF</div>
<div class="t" style="left:703.00px;top:783px;font-size:17.20px;color:#111;font-weight:normal;transform:scaleX(0.9);transform-origin:left top;">AFG</div>
<div class="t" style="left:862.00px;top:783px;font-size:17.20px;color:#111;font-weight:normal;transform:translateX(-100%);">38041757</div>
<div class="t" style="left:867.00px;top:783px;font-size:17.20px;color:#111;font-weight:normal;transform:scaleX(0.95);transform-origin:left top;">Asia</div>
<div class="t" style="left:17.50px;top:783px;font-size:17.20px;color:#333;font-weight:normal;transform:translateX(-50%);">21</div>
<div class="t" style="left:38.00px;top:808px;font-size:17.20px;color:#111;font-weight:normal;">23-07-2020</div>
<div class="t" style="left:207.00px;top:808px;font-size:17.20px;color:#111;font-weight:normal;transform:translateX(-100%);">23</div>
<div class="t" style="left:289.00px;top:808px;font-size:17.20px;color:#111;font-weight:normal;transform:translateX(-100%);">7</div>
<div class="t" style="left:371.00px;top:808px;font-size:17.20px;color:#111;font-weight:normal;transform:translateX(-100%);">2020</div>
<div class="t" style="left:453.00px;top:808px;font-size:17.20px;color:#111;font-weight:normal;transform:translateX(-100%);">188</div>
<div class="t" style="left:535.00px;top:808px;font-size:17.20px;color:#111;font-weight:normal;transform:translateX(-100%);">21</div>
<div class="r" style="left:538px;top:803px;width:81px;height:24px;overflow:hidden">
<div class="t" style="left:2px;top:5px;font-size:17.20px;color:#111">Afghanistan</div></div>
<div class="t" style="left:622.00px;top:808px;font-size:17.20px;color:#111;font-weight:normal;transform:scaleX(0.9);transform-origin:left top;">AF</div>
<div class="t" style="left:703.00px;top:808px;font-size:17.20px;color:#111;font-weight:normal;transform:scaleX(0.9);transform-origin:left top;">AFG</div>
<div class="t" style="left:862.00px;top:808px;font-size:17.20px;color:#111;font-weight:normal;transform:translateX(-100%);">38041757</div>
<div class="t" style="left:867.00px;top:808px;font-size:17.20px;color:#111;font-weight:normal;transform:scaleX(0.95);transform-origin:left top;">Asia</div>
<div class="t" style="left:17.50px;top:808px;font-size:17.20px;color:#333;font-weight:normal;transform:translateX(-50%);">22</div>
<div class="t" style="left:38.00px;top:833px;font-size:17.20px;color:#111;font-weight:normal;">22-07-2020</div>
<div class="t" style="left:207.00px;top:833px;font-size:17.20px;color:#111;font-weight:normal;transform:translateX(-100%);">22</div>
<div class="t" style="left:289.00px;top:833px;font-size:17.20px;color:#111;font-weight:normal;transform:translateX(-100%);">7</div>
<div class="t" style="left:371.00px;top:833px;font-size:17.20px;color:#111;font-weight:normal;transform:translateX(-100%);">2020</div>
<div class="t" style="left:453.00px;top:833px;font-size:17.20px;color:#111;font-weight:normal;transform:translateX(-100%);">112</div>
<div class="t" style="left:535.00px;top:833px;font-size:17.20px;color:#111;font-weight:normal;transform:translateX(-100%);">4</div>
<div class="r" style="left:538px;top:828px;width:81px;height:24px;overflow:hidden">
<div class="t" style="left:2px;top:5px;font-size:17.20px;color:#111">Afghanistan</div></div>
<div class="t" style="left:622.00px;top:833px;font-size:17.20px;color:#111;font-weight:normal;transform:scaleX(0.9);transform-origin:left top;">AF</div>
<div class="t" style="left:703.00px;top:833px;font-size:17.20px;color:#111;font-weight:normal;transform:scaleX(0.9);transform-origin:left top;">AFG</div>
<div class="t" style="left:862.00px;top:833px;font-size:17.20px;color:#111;font-weight:normal;transform:translateX(-100%);">38041757</div>
<div class="t" style="left:867.00px;top:833px;font-size:17.20px;color:#111;font-weight:normal;transform:scaleX(0.95);transform-origin:left top;">Asia</div>
<div class="t" style="left:17.50px;top:833px;font-size:17.20px;color:#333;font-weight:normal;transform:translateX(-50%);">23</div>
<div class="t" style="left:38.00px;top:857px;font-size:17.20px;color:#111;font-weight:normal;">21-07-2020</div>
<div class="t" style="left:207.00px;top:857px;font-size:17.20px;color:#111;font-weight:normal;transform:translateX(-100%);">21</div>
<div class="t" style="left:289.00px;top:857px;font-size:17.20px;color:#111;font-weight:normal;transform:translateX(-100%);">7</div>
<div class="t" style="left:371.00px;top:857px;font-size:17.20px;color:#111;font-weight:normal;transform:translateX(-100%);">2020</div>
<div class="t" style="left:453.00px;top:857px;font-size:17.20px;color:#111;font-weight:normal;transform:translateX(-100%);">146</div>
<div class="t" style="left:535.00px;top:857px;font-size:17.20px;color:#111;font-weight:normal;transform:translateX(-100%);">5</div>
<div class="r" style="left:538px;top:852px;width:81px;height:24px;overflow:hidden">
<div class="t" style="left:2px;top:5px;font-size:17.20px;color:#111">Afghanistan</div></div>
<div class="t" style="left:622.00px;top:857px;font-size:17.20px;color:#111;font-weight:normal;transform:scaleX(0.9);transform-origin:left top;">AF</div>
<div class="t" style="left:703.00px;top:857px;font-size:17.20px;color:#111;font-weight:normal;transform:scaleX(0.9);transform-origin:left top;">AFG</div>
<div class="t" style="left:862.00px;top:857px;font-size:17.20px;color:#111;font-weight:normal;transform:translateX(-100%);">38041757</div>
<div class="t" style="left:867.00px;top:857px;font-size:17.20px;color:#111;font-weight:normal;transform:scaleX(0.95);transform-origin:left top;">Asia</div>
<div class="t" style="left:17.50px;top:857px;font-size:17.20px;color:#333;font-weight:normal;transform:translateX(-50%);">24</div>
<div class="t" style="left:17.00px;top:289px;font-size:17.20px;color:#333;font-weight:normal;transform:translateX(-50%);">1</div>
<div class="r" style="left:323.5px;top:465.5px;width:60.5px;height:61px;border:3px solid #fff000;border-radius:50%"></div>
<svg class="r" style="left:352.8px;top:496px" width="17" height="24" viewBox="0 0 17 24" fill="none"><path d="M0.5 0.5 V19 L4.8 15 L8 21.5 L10.8 20.3 L7.8 14.2 H14.8 Z" fill="#fdfdfd" stroke="#555" stroke-width="1"/></svg>
</body></html>
